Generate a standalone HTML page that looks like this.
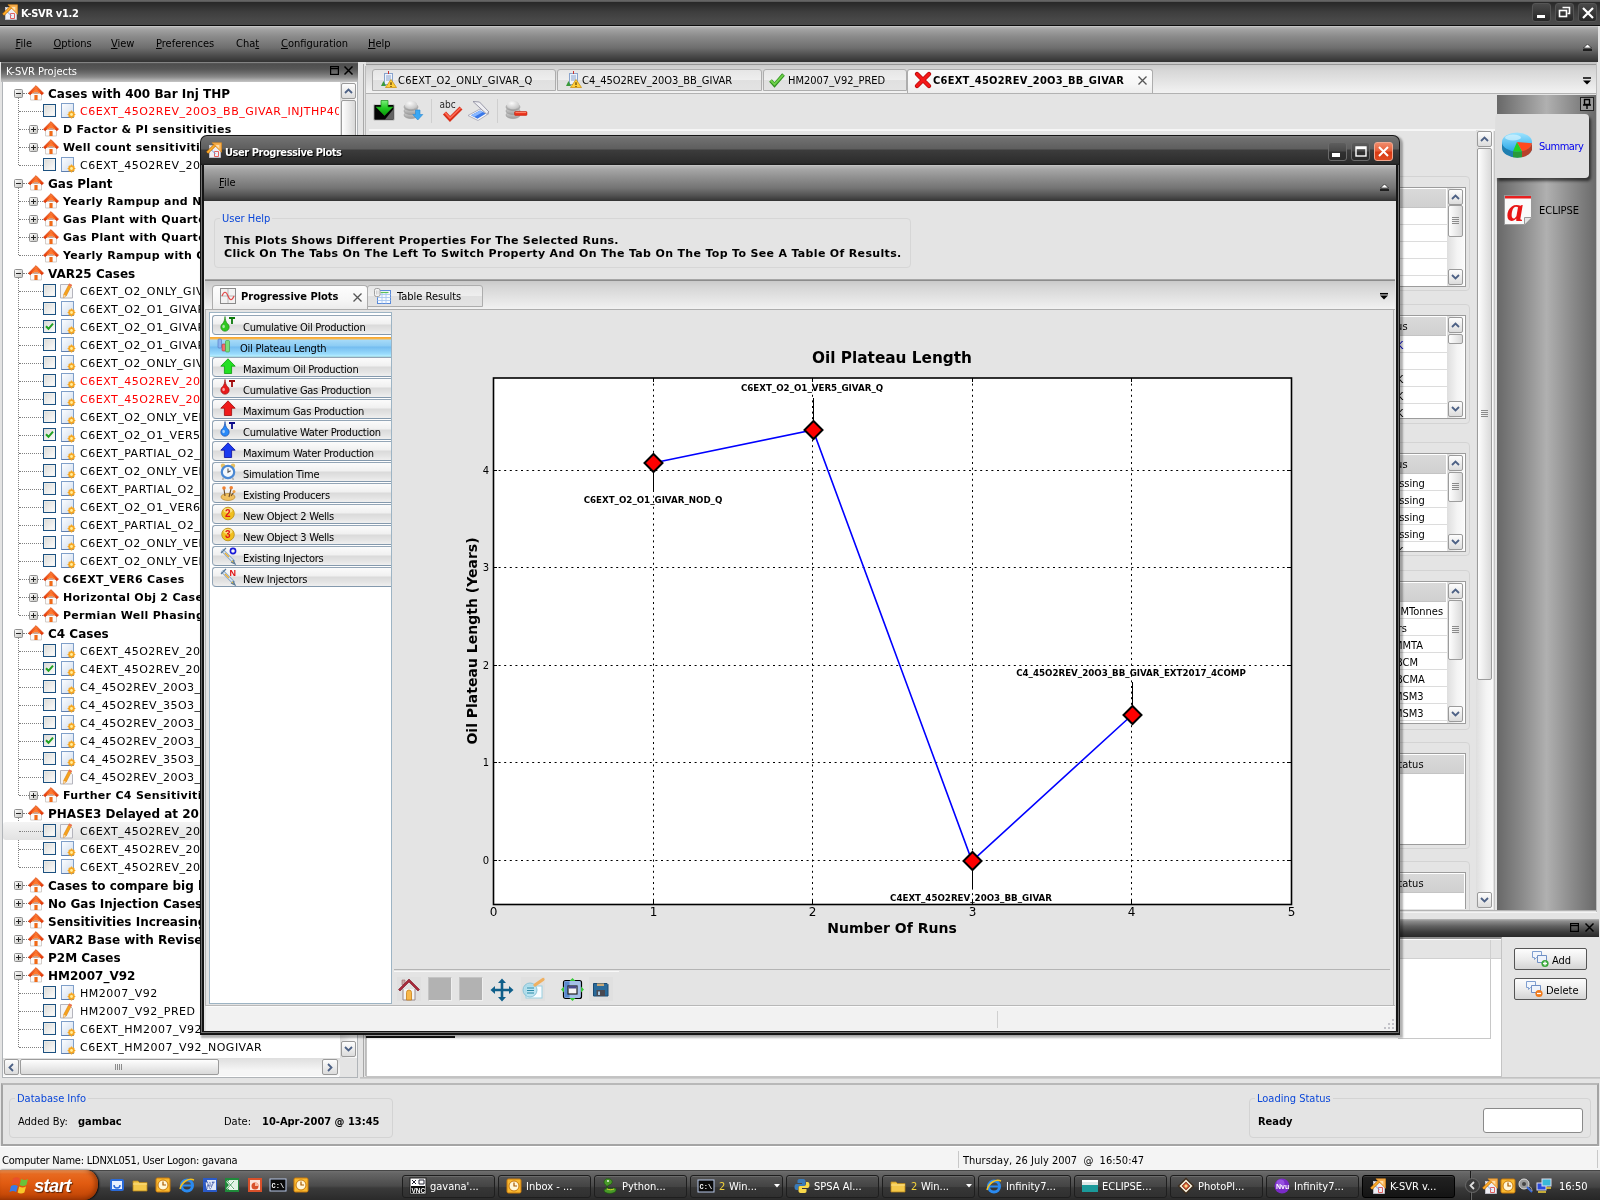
<!DOCTYPE html>
<html lang="en"><head><meta charset="utf-8"><title>K-SVR v1.2</title>
<style>
*{box-sizing:border-box;margin:0;padding:0}
html,body{width:1600px;height:1200px;overflow:hidden;background:#e4e4e4}
body{position:relative;font-family:"DejaVu Sans Condensed","Liberation Sans",sans-serif;font-size:11px;color:#000;line-height:1}
.a{position:absolute}
.t{position:absolute;white-space:nowrap;line-height:14px;height:14px;margin-top:1px}
.v{font-family:"DejaVu Sans","Liberation Sans",sans-serif}
.b{font-weight:bold}
.w{color:#fff}
.red{color:#f00}
.blue{color:#0040d0}
u{text-decoration:underline;text-underline-offset:1px}
svg{position:absolute;overflow:visible}
.sbbtn{position:absolute;width:15px;height:16px;border:1px solid #9a9a9a;border-radius:2px;background:linear-gradient(#fdfdfd,#dcdcdc)}
.sbtrack{position:absolute;background:linear-gradient(90deg,#dedede,#f4f4f4 60%,#fafafa)}
.sbthumb{position:absolute;border:1px solid #9c9c9c;border-radius:2px;background:linear-gradient(90deg,#fefefe,#d9d9d9)}
.grp{position:absolute;border:1px solid #d3d3d3;border-radius:4px}
.hdr{position:absolute;background:linear-gradient(#d9d9d9,#d0d0d0);border-bottom:1px solid #c4c4c4}
.row{position:absolute;border-bottom:1px solid #dcdcdc;background:#fff}
</style></head>
<body>
<div id="root" style="position:absolute;left:0;top:0;width:1600px;height:1200px;will-change:transform">
<div class="a" style="left:0;top:0;width:1600px;height:26px;background:linear-gradient(#6a6a6a 0,#5a5a5a 1.5px,#282828 2px,#2e2e2e 5px,#3e3e3e 12px,#484848 20px,#4a4a4a 24.500px,#0e0e0e 25px,#0e0e0e 26px)"></div>
<svg style="left:2px;top:4px" width="17" height="16" viewBox="0 0 17 16"><rect x="3.5" y="3.5" width="11" height="12" fill="#eeeef4" stroke="#c9c9d4" stroke-width=".8"/><path d="M6 .8H15.500V10.300z" fill="#f8b050" stroke="#d88a20" stroke-width=".7"/><path d="M9.500 3h3.800v3.800z" fill="#fde0b0"/><path d="M8.500 9.500h4v5h-4z" fill="none" stroke="#e06060" stroke-width="1"/><path d="M5.500 8l4 4" stroke="#6a9ae0" stroke-width=".9"/><path d="M1.200 10.800L8.800 3.200" stroke="#c06a00" stroke-width="3"/><path d="M1.400 10.600L8.600 3.400" stroke="#ffb030" stroke-width="1.600"/></svg>
<div class="t b w" style="left:21px;top:6px;font-size:11px;letter-spacing:-.3px">K-SVR v1.2</div>
<div class="a" style="left:1532px;top:3px;width:19px;height:19px;border-radius:3px;background:linear-gradient(#4a4a4a,#262626);border:1px solid #555"></div>
<div class="a" style="left:1555px;top:3px;width:19px;height:19px;border-radius:3px;background:linear-gradient(#4a4a4a,#262626);border:1px solid #555"></div>
<div class="a" style="left:1578px;top:3px;width:19px;height:19px;border-radius:3px;background:linear-gradient(#4a4a4a,#262626);border:1px solid #555"></div>
<div class="a" style="left:1537px;top:15px;width:8px;height:3px;background:#fff"></div>
<svg style="left:1558px;top:6px" width="13" height="13" viewBox="0 0 13 13"><path d="M4.5 1.5h7v6h-2" fill="none" stroke="#fff" stroke-width="1.6"/><rect x="1.5" y="4.5" width="7" height="6" fill="none" stroke="#fff" stroke-width="1.6"/></svg>
<svg style="left:1582px;top:7px" width="12" height="12" viewBox="0 0 12 12"><path d="M1 1L11 11M11 1L1 11" stroke="#fff" stroke-width="2.2"/></svg>
<div class="a" style="left:0;top:26px;width:1598px;height:36px;background:linear-gradient(#d8d8d8 0,#b2b2b2 1px,#a0a0a0 4px,#8c8c8c 10px,#6e6e6e 22px,#4a4a4a 30px,#363636 35px,#333 36px)"></div>
<div class="t" style="left:15.5px;top:36px"><u>F</u>ile</div>
<div class="t" style="left:53.5px;top:36px"><u>O</u>ptions</div>
<div class="t" style="left:111px;top:36px"><u>V</u>iew</div>
<div class="t" style="left:156px;top:36px"><u>P</u>references</div>
<div class="t" style="left:236px;top:36px">Cha<u>t</u></div>
<div class="t" style="left:281px;top:36px"><u>C</u>onfiguration</div>
<div class="t" style="left:368px;top:36px"><u>H</u>elp</div>
<svg style="left:1583px;top:43px" width="9" height="8" viewBox="0 0 9 8"><path d="M0.5 5L4.5 1L8.5 5Z" fill="#fff" stroke="#000" stroke-width=".6"/><path d="M0 7h9" stroke="#000" stroke-width="1.4"/></svg>
<div class="a" style="left:363px;top:64px;width:1237px;height:1014px;border-left:1px solid #a8a8a8"></div>
<div class="a" style="left:365px;top:66px;width:1px;height:1010px;background:#bcbcbc"></div>
<div class="a" style="left:366px;top:62px;width:1231px;height:31px;background:linear-gradient(#c4c4c4 0,#c8c8c8 1.500px,#969696 2px,#969696 3px,#cdcdcd 3.500px,#d6d6d6 8px,#ececec 26px,#f2f2f2 31px)"></div>
<div class="a" style="left:366px;top:93px;width:1231px;height:1px;background:#b2b2b2"></div>
<div class="a" style="left:372px;top:69px;width:184px;height:22px;background:linear-gradient(#e6e6e6,#eeeeee 48%,#e0e0e0 50%,#e3e3e3);border:1px solid #adadad;border-radius:3px 3px 0 0"></div>
<div class="t" style="left:398px;top:73px;letter-spacing:.25px">C6EXT_O2_ONLY_GIVAR_Q</div>
<svg style="left:381px;top:71px" width="16" height="17" viewBox="0 0 16 17"><rect x="3.5" y="2.5" width="8" height="11" fill="#eef3fb" stroke="#8aa4cc"/><path d="M5 5h5M5 7h5M5 9h5" stroke="#6f8fc4" stroke-width=".8"/><path d="M7.5 0v3" stroke="#c33" stroke-width="1"/><path d="M0 15l2.5-5 2.5 5z" fill="#3a9a3a"/><path d="M10 8.5l5.5 8h-11z" fill="#ffcf3a" stroke="#c98a00" stroke-width=".7"/><path d="M10 11.2v2.8M10 15v.9" stroke="#5a3a00" stroke-width="1.2"/></svg>
<div class="a" style="left:557px;top:69px;width:205px;height:22px;background:linear-gradient(#e6e6e6,#eeeeee 48%,#e0e0e0 50%,#e3e3e3);border:1px solid #adadad;border-radius:3px 3px 0 0"></div>
<div class="t" style="left:582px;top:73px;letter-spacing:0">C4_45O2REV_20O3_BB_GIVAR</div>
<svg style="left:566px;top:71px" width="16" height="17" viewBox="0 0 16 17"><rect x="3.5" y="2.5" width="8" height="11" fill="#eef3fb" stroke="#8aa4cc"/><path d="M5 5h5M5 7h5M5 9h5" stroke="#6f8fc4" stroke-width=".8"/><path d="M7.5 0v3" stroke="#c33" stroke-width="1"/><path d="M0 15l2.5-5 2.5 5z" fill="#3a9a3a"/><path d="M10 8.5l5.5 8h-11z" fill="#ffcf3a" stroke="#c98a00" stroke-width=".7"/><path d="M10 11.2v2.8M10 15v.9" stroke="#5a3a00" stroke-width="1.2"/></svg>
<div class="a" style="left:763px;top:69px;width:144px;height:22px;background:linear-gradient(#e6e6e6,#eeeeee 48%,#e0e0e0 50%,#e3e3e3);border:1px solid #adadad;border-radius:3px 3px 0 0"></div>
<div class="t" style="left:788px;top:73px;letter-spacing:0">HM2007_V92_PRED</div>
<svg style="left:769px;top:72px" width="16" height="16" viewBox="0 0 16 16"><path d="M1.5 8.5L5.5 13 14.5 2.5" fill="none" stroke="#2f8f1f" stroke-width="3.6"/><path d="M1.8 8.5L5.5 12.4 14.2 2.8" fill="none" stroke="#6fd24a" stroke-width="2"/></svg>
<div class="a" style="left:907px;top:69px;width:246px;height:24px;background:linear-gradient(#fcfcfc,#f6f6f6 60%,#ececec);border:1px solid #adadad;border-bottom:none;border-radius:3px 3px 0 0"></div>
<div class="t b" style="left:933px;top:73px;letter-spacing:.25px">C6EXT_45O2REV_20O3_BB_GIVAR</div>
<svg style="left:915px;top:72px" width="16" height="16" viewBox="0 0 16 16"><path d="M2 2L14 14M14 2L2 14" stroke="#b80808" stroke-width="4.400" stroke-linecap="round"/><path d="M2.2 2.2L13.8 13.8M13.8 2.2L2.2 13.8" stroke="#f41818" stroke-width="3" stroke-linecap="round"/></svg>
<svg style="left:1138px;top:76px" width="9" height="9"><path d="M.5.5l8 8M8.5.5l-8 8" stroke="#555" stroke-width="1.3"/></svg>
<svg style="left:1582px;top:78px" width="10" height="7"><path d="M1 0h8" stroke="#000" stroke-width="1.5"/><path d="M1 2.5h8L5 6.5z" fill="#000"/></svg>
<svg width="0" height="0" style="left:0;top:0"><defs><linearGradient id="gDb" x1="0" y1="0" x2="0" y2="1"><stop offset="0" stop-color="#dcdcdc"/><stop offset="1" stop-color="#9c9c9c"/></linearGradient><radialGradient id="gDb2" cx=".4" cy=".3" r=".8"><stop offset="0" stop-color="#fafafa"/><stop offset="1" stop-color="#bdbdbd"/></radialGradient><linearGradient id="gGr" x1="0" y1="0" x2="0" y2="1"><stop offset="0" stop-color="#7af07a"/><stop offset=".5" stop-color="#22c822"/><stop offset="1" stop-color="#0a9a0a"/></linearGradient></defs></svg>
<svg style="left:373px;top:100px" width="22" height="22" viewBox="0 0 22 22"><rect x=".7" y="4.500" width="20.600" height="15.800" rx="1.200" fill="#050505" stroke="#c8c8c8" stroke-width="1.200"/><path d="M20.500 9v10.500H12z" fill="#b0b0b0" opacity=".55"/><path d="M8 .5h7V7h5L11.500 15.500 3 7h5z" fill="url(#gGr)" stroke="#128a12" stroke-width=".7"/></svg>
<svg style="left:403px;top:100px" width="22" height="22" viewBox="0 0 22 22"><ellipse cx="8" cy="15" rx="7" ry="3.600" fill="url(#gDb)" stroke="#8e8e8e" stroke-width=".5"/><ellipse cx="8" cy="11" rx="7" ry="3.600" fill="url(#gDb)" stroke="#8e8e8e" stroke-width=".5"/><ellipse cx="8" cy="7" rx="7" ry="3.600" fill="url(#gDb)" stroke="#8e8e8e" stroke-width=".5"/><ellipse cx="8" cy="5" rx="6.200" ry="4.200" fill="url(#gDb2)"/><path d="M12.500 10h4.500v4.500h2.800l-5 5.500-5-5.500h2.700z" fill="#3aa8f4" stroke="#2a86d0" stroke-width=".6"/></svg>
<div class="a" style="left:431px;top:99px;width:1px;height:24px;background:#cfcfcf"></div>
<div class="t" style="left:439.500px;top:97px;font-size:10px;color:#2a2a2a">abc</div>
<svg style="left:442px;top:106px" width="22" height="16" viewBox="0 0 22 16"><path d="M2.500 7l5.500 6L19 2" fill="none" stroke="#d8301a" stroke-width="4.200"/><path d="M3 6.600l5 5.400L18.500 2" fill="none" stroke="#ff6a54" stroke-width="1.600"/></svg>
<svg style="left:467px;top:100px" width="24" height="22" viewBox="0 0 24 22"><path d="M1 15.500l12-6.500 9 4.500-11 7z" fill="#fafafa" stroke="#a0a0b0" stroke-width=".8"/><path d="M4 15.300l9-4.800 6 3-8.500 5.200z" fill="#3a78e8"/><path d="M4 15.300l9-4.800 3 1.500-9 5z" fill="#8ab8ff"/><path d="M6 1.500l6.500.5 9.500 10-2.500 2z" fill="#eeeef2" stroke="#8e8ea0" stroke-width=".9"/></svg>
<div class="a" style="left:497px;top:99px;width:1px;height:24px;background:#cfcfcf"></div>
<svg style="left:505px;top:100px" width="24" height="22" viewBox="0 0 24 22"><ellipse cx="8" cy="15" rx="7" ry="3.600" fill="url(#gDb)" stroke="#8e8e8e" stroke-width=".5"/><ellipse cx="8" cy="11" rx="7" ry="3.600" fill="url(#gDb)" stroke="#8e8e8e" stroke-width=".5"/><ellipse cx="8" cy="7" rx="7" ry="3.600" fill="url(#gDb)" stroke="#8e8e8e" stroke-width=".5"/><ellipse cx="8" cy="5" rx="6.200" ry="4.200" fill="url(#gDb2)"/><rect x="9.500" y="11.500" width="12.500" height="4" rx="1" fill="#e8301a" stroke="#c0200a" stroke-width=".5"/><path d="M10.500 12.600h10.500" stroke="#ff8a70" stroke-width="1"/></svg>
<div class="a" style="left:369px;top:129px;width:1126px;height:784px;border-top:2px solid #f6f6f6"></div>
<div class="grp" style="left:1300px;top:176px;width:170px;height:115px"></div>
<div class="a" style="left:1300px;top:187px;width:166px;height:100px;background:#fff;border:1px solid #9c9c9c;overflow:hidden">
<div class="hdr" style="left:1px;top:1px;width:144px;height:19px"></div>
<div class="row" style="left:0;top:20px;width:146px;height:17px"></div>
<div class="row" style="left:0;top:37px;width:146px;height:17px"></div>
<div class="row" style="left:0;top:54px;width:146px;height:17px"></div>
<div class="row" style="left:0;top:71px;width:146px;height:17px"></div>
<div class="row" style="left:0;top:88px;width:146px;height:17px"></div>
</div>
<div class="sbtrack" style="left:1447px;top:188px;width:17px;height:98px"></div>
<div class="sbbtn" style="left:1448px;top:189px"></div>
<svg style="left:1451px;top:194px" width="9" height="6"><path d="M1 5L4.5 1.5 8 5" fill="none" stroke="#4d6185" stroke-width="1.8"/></svg>
<div class="sbthumb" style="left:1448px;top:205px;width:15px;height:32px"></div>
<div class="a" style="left:1452px;top:217px;width:7px;height:8px;background:repeating-linear-gradient(#8a8a8a 0 1px,transparent 1px 2px)"></div>
<div class="sbbtn" style="left:1448px;top:269px"></div>
<svg style="left:1451px;top:274px" width="9" height="6"><path d="M1 1L4.5 4.5 8 1" fill="none" stroke="#4d6185" stroke-width="1.8"/></svg>
<div class="grp" style="left:1300px;top:304px;width:170px;height:120px"></div>
<div class="a" style="left:1300px;top:315px;width:166px;height:104px;background:#fff;border:1px solid #9c9c9c;overflow:hidden">
<div class="hdr" style="left:1px;top:1px;width:144px;height:19px"></div>
<div class="t" style="left:75px;top:3px">Status</div>
<div class="row" style="left:0;top:20px;width:146px;height:17px"></div>
<div class="t" style="left:88px;top:22px;color:#00c">OK</div>
<div class="row" style="left:0;top:37px;width:146px;height:17px"></div>
<div class="row" style="left:0;top:54px;width:146px;height:17px"></div>
<div class="t" style="left:88px;top:56px;color:#000">OK</div>
<div class="row" style="left:0;top:71px;width:146px;height:17px"></div>
<div class="t" style="left:88px;top:73px;color:#000">OK</div>
<div class="row" style="left:0;top:88px;width:146px;height:17px"></div>
<div class="t" style="left:88px;top:90px;color:#000">OK</div>
</div>
<div class="sbtrack" style="left:1447px;top:316px;width:17px;height:102px"></div>
<div class="sbbtn" style="left:1448px;top:317px"></div>
<svg style="left:1451px;top:322px" width="9" height="6"><path d="M1 5L4.5 1.5 8 5" fill="none" stroke="#4d6185" stroke-width="1.8"/></svg>
<div class="sbthumb" style="left:1448px;top:334px;width:15px;height:10px"></div>
<div class="sbbtn" style="left:1448px;top:401px"></div>
<svg style="left:1451px;top:406px" width="9" height="6"><path d="M1 1L4.5 4.5 8 1" fill="none" stroke="#4d6185" stroke-width="1.8"/></svg>
<div class="grp" style="left:1300px;top:442px;width:170px;height:114px"></div>
<div class="a" style="left:1300px;top:453px;width:166px;height:99px;background:#fff;border:1px solid #9c9c9c;overflow:hidden">
<div class="hdr" style="left:1px;top:1px;width:144px;height:19px"></div>
<div class="t" style="left:75px;top:3px">Status</div>
<div class="row" style="left:0;top:20px;width:146px;height:17px"></div>
<div class="t" style="left:71px;top:22px;color:#000">Processing</div>
<div class="row" style="left:0;top:37px;width:146px;height:17px"></div>
<div class="t" style="left:71px;top:39px;color:#000">Processing</div>
<div class="row" style="left:0;top:54px;width:146px;height:17px"></div>
<div class="t" style="left:71px;top:56px;color:#000">Processing</div>
<div class="row" style="left:0;top:71px;width:146px;height:17px"></div>
<div class="t" style="left:71px;top:73px;color:#000">Processing</div>
<div class="row" style="left:0;top:88px;width:146px;height:17px"></div>
<div class="t" style="left:88px;top:90px;color:#000">OK</div>
</div>
<div class="sbtrack" style="left:1447px;top:454px;width:17px;height:97px"></div>
<div class="sbbtn" style="left:1448px;top:455px"></div>
<svg style="left:1451px;top:460px" width="9" height="6"><path d="M1 5L4.5 1.5 8 5" fill="none" stroke="#4d6185" stroke-width="1.8"/></svg>
<div class="sbthumb" style="left:1448px;top:472px;width:15px;height:30px"></div>
<div class="a" style="left:1452px;top:483px;width:7px;height:8px;background:repeating-linear-gradient(#8a8a8a 0 1px,transparent 1px 2px)"></div>
<div class="sbbtn" style="left:1448px;top:534px"></div>
<svg style="left:1451px;top:539px" width="9" height="6"><path d="M1 1L4.5 4.5 8 1" fill="none" stroke="#4d6185" stroke-width="1.8"/></svg>
<div class="grp" style="left:1300px;top:570px;width:170px;height:160px"></div>
<div class="a" style="left:1300px;top:581px;width:166px;height:143px;background:#fff;border:1px solid #9c9c9c;overflow:hidden">
<div class="hdr" style="left:1px;top:1px;width:144px;height:19px"></div>
<div class="row" style="left:0;top:20px;width:146px;height:17px"></div>
<div class="t" style="left:91px;top:22px;color:#000">MMTonnes</div>
<div class="row" style="left:0;top:37px;width:146px;height:17px"></div>
<div class="t" style="left:80px;top:39px;color:#000">Years</div>
<div class="row" style="left:0;top:54px;width:146px;height:17px"></div>
<div class="t" style="left:93px;top:56px;color:#000">MMTA</div>
<div class="row" style="left:0;top:71px;width:146px;height:17px"></div>
<div class="t" style="left:95px;top:73px;color:#000">BCM</div>
<div class="row" style="left:0;top:88px;width:146px;height:17px"></div>
<div class="t" style="left:95px;top:90px;color:#000">BCMA</div>
<div class="row" style="left:0;top:105px;width:146px;height:17px"></div>
<div class="t" style="left:93px;top:107px;color:#000">MSM3</div>
<div class="row" style="left:0;top:122px;width:146px;height:17px"></div>
<div class="t" style="left:93px;top:124px;color:#000">MSM3</div>
<div class="row" style="left:0;top:139px;width:146px;height:17px"></div>
</div>
<div class="sbtrack" style="left:1447px;top:582px;width:17px;height:141px"></div>
<div class="sbbtn" style="left:1448px;top:583px"></div>
<svg style="left:1451px;top:588px" width="9" height="6"><path d="M1 5L4.5 1.5 8 5" fill="none" stroke="#4d6185" stroke-width="1.8"/></svg>
<div class="sbthumb" style="left:1448px;top:600px;width:15px;height:60px"></div>
<div class="a" style="left:1452px;top:626px;width:7px;height:8px;background:repeating-linear-gradient(#8a8a8a 0 1px,transparent 1px 2px)"></div>
<div class="sbbtn" style="left:1448px;top:706px"></div>
<svg style="left:1451px;top:711px" width="9" height="6"><path d="M1 1L4.5 4.5 8 1" fill="none" stroke="#4d6185" stroke-width="1.8"/></svg>
<div class="grp" style="left:1300px;top:742px;width:170px;height:107px"></div>
<div class="a" style="left:1300px;top:753px;width:166px;height:92px;background:#fff;border:1px solid #9c9c9c;overflow:hidden">
<div class="hdr" style="left:1px;top:1px;width:162px;height:19px"></div>
<div class="t" style="left:91px;top:3px">Status</div>
</div>
<div class="a" style="left:1300px;top:861px;width:170px;height:52px;overflow:hidden"><div class="grp" style="left:0;top:0;width:170px;height:80px"></div></div>
<div class="a" style="left:1300px;top:872px;width:166px;height:37px;overflow:hidden;background:#fff;border:1px solid #9c9c9c;border-bottom:none"><div class="hdr" style="left:1px;top:1px;width:162px;height:19px"></div><div class="t" style="left:91px;top:3px">Status</div></div>
<div class="sbtrack" style="left:1476px;top:130px;width:17px;height:779px"></div>
<div class="sbbtn" style="left:1477px;top:131px"></div>
<svg style="left:1480px;top:136px" width="9" height="6"><path d="M1 5L4.5 1.5 8 5" fill="none" stroke="#4d6185" stroke-width="1.8"/></svg>
<div class="sbthumb" style="left:1477px;top:148px;width:15px;height:532px"></div>
<div class="a" style="left:1481px;top:410px;width:7px;height:8px;background:repeating-linear-gradient(#8a8a8a 0 1px,transparent 1px 2px)"></div>
<div class="sbbtn" style="left:1477px;top:892px"></div>
<svg style="left:1480px;top:897px" width="9" height="6"><path d="M1 1L4.5 4.5 8 1" fill="none" stroke="#4d6185" stroke-width="1.8"/></svg>
<div class="a" style="left:369px;top:910px;width:1228px;height:3px;background:linear-gradient(#b4b4b4 0,#b4b4b4 1px,#e4e4e4 1px,#e4e4e4 2px,#f4f4f4 2px)"></div>
<div class="a" style="left:1494px;top:131px;width:1px;height:779px;background:#c4c4c4"></div>
<div class="a" style="left:1596px;top:64px;width:1px;height:848px;background:#bdbdbd"></div>
<div class="a" style="left:1497px;top:95px;width:99px;height:815px;background:linear-gradient(90deg,#686868 0,#8a8a8a 25%,#b0b0b0 50%,#8c8c8c 75%,#6a6a6a 100%)"></div>
<div class="a" style="left:1497px;top:95px;width:99px;height:18px;background:linear-gradient(90deg,#686868,#b0b0b0 50%,#6a6a6a)"></div>
<svg style="left:1580px;top:97px" width="14" height="14" viewBox="0 0 14 14"><rect x=".5" y=".5" width="13" height="13" fill="#9a9a9a" stroke="#222"/><path d="M4.5 2.5h5v5h-5zM3 8h8M7 8v4" fill="none" stroke="#000" stroke-width="1.4"/></svg>
<div class="a" style="left:1496px;top:114px;width:93px;height:64px;background:#dedede;border-radius:0 4px 4px 0;box-shadow:2px 3px 3px rgba(0,0,0,.6)"></div>
<svg style="left:1501px;top:131px" width="34" height="30" viewBox="0 0 34 30"><defs><linearGradient id="gPie" x1="0" y1="0" x2="0" y2="1"><stop offset="0" stop-color="#9fe4ff"/><stop offset="1" stop-color="#28a8e8"/></linearGradient></defs><path d="M1 11v6a15 9.500 0 0 0 30 0v-6z" fill="#1f7fb0"/><path d="M12 26.200v-6h9v6a15 9.500 0 0 1-9 0z" fill="#2a9a3a"/><path d="M21 26.200c5-1 9-4 10-8v-6l-10 8z" fill="#b8402a"/><ellipse cx="16" cy="11" rx="15" ry="9.500" fill="url(#gPie)"/><path d="M16 11L12 20.200a15 9.500 0 0 0 9 0z" fill="#22d022"/><path d="M16 11L21 20.200c5-1 9-4 10-8z" fill="#ff4a20"/><ellipse cx="12" cy="6.500" rx="8" ry="3" fill="#e4f8ff" opacity=".6"/></svg>
<div class="t" style="left:1539px;top:139px;color:#00e;letter-spacing:-.5px">Summary</div>
<svg style="left:1503px;top:194px" width="30" height="32" viewBox="0 0 30 32"><path d="M1.5 1.5h27v22l-7 7h-20z" fill="#fafafa" stroke="#9a9a9a"/><path d="M21.5 30.5v-7h7" fill="#e4e4e4" stroke="#9a9a9a"/><rect x="2" y="2" width="26" height="2.500" fill="#e82020"/></svg>
<div class="t b" style="left:1507px;top:194px;font-family:'Liberation Serif',serif;font-style:italic;font-size:33px;line-height:30px;height:30px;color:#e81414">a</div>
<div class="t" style="left:1539px;top:203px">ECLIPSE</div>
<div class="a" style="left:1398px;top:919px;width:201px;height:18px;background:linear-gradient(#b8b8b8 0,#8e8e8e 2px,#626262 7px,#3c3c3c 13px,#282828 18px)"></div>
<svg style="left:1570px;top:923px" width="9" height="9" viewBox="0 0 9 9"><rect x=".6" y=".6" width="7.8" height="7.8" fill="none" stroke="#000" stroke-width="1.2"/><path d="M.6 2.6h7.8" stroke="#000" stroke-width="1.2"/></svg>
<svg style="left:1585px;top:923px" width="9" height="9" viewBox="0 0 9 9"><path d="M.5.5l8 8M8.5.5l-8 8" stroke="#000" stroke-width="1.5"/></svg>
<div class="a" style="left:366px;top:937px;width:1136px;height:140px;background:#fff;border:1px solid #c4c4c4;border-top:2px solid #8e8e8e"></div>
<div class="a" style="left:1398px;top:940px;width:93px;height:99px;background:#fff;border:1px solid #c8c8c8;border-left:none"></div>
<div class="a" style="left:1398px;top:940px;width:103px;height:19px;background:#e4e4e4;border-bottom:1px solid #d0d0d0"></div><div class="a" style="left:1490px;top:940px;width:1px;height:19px;background:#cfcfcf"></div>
<div class="a" style="left:1514px;top:948px;width:73px;height:22px;border:1px solid #555;border-radius:2px;background:linear-gradient(#fdfdfd,#ececec 50%,#d4d4d4)"></div>
<div class="a" style="left:1514px;top:978px;width:73px;height:22px;border:1px solid #555;border-radius:2px;background:linear-gradient(#fdfdfd,#ececec 50%,#d4d4d4)"></div>
<div class="t" style="left:1552px;top:953px">Add</div>
<div class="t" style="left:1546px;top:983px">Delete</div>
<svg style="left:1531px;top:950px" width="19" height="18" viewBox="0 0 19 18"><path d="M1.5 1.5h9v6h-5l-2 2v-2h-2z" fill="#f2f6fc" stroke="#7f9fd0"/><path d="M6.500 5.500h9v7h-2v2l-2-2h-5z" fill="#eef3fb" stroke="#6f8fc4"/><circle cx="14" cy="13.500" r="3.600" fill="#3aa83a"/><path d="M12 13.500h4M14 11.500v4" stroke="#fff" stroke-width="1.300"/></svg>
<svg style="left:1525px;top:980px" width="19" height="18" viewBox="0 0 19 18"><path d="M1.5 1.5h9v6h-5l-2 2v-2h-2z" fill="#f2f6fc" stroke="#7f9fd0"/><path d="M6.500 5.500h9v7h-2v2l-2-2h-5z" fill="#eef3fb" stroke="#6f8fc4"/><circle cx="14" cy="13.500" r="3.600" fill="#f07a1a"/><path d="M12 13.500h4" stroke="#fff" stroke-width="1.300"/></svg>
<div class="a" style="left:0;top:1077px;width:1600px;height:2px;background:linear-gradient(#bcbcbc,#d4d4d4)"></div>
<div class="a" style="left:1px;top:1083px;width:1598px;height:63px;border:2px solid #a4a4a4;border-top:2px solid #b8b8b8;background:#e4e4e4"></div>
<div class="grp" style="left:9px;top:1098px;width:384px;height:40px"></div>
<div class="t" style="left:15px;top:1091px;color:#0a46d8;background:#e4e4e4;padding:0 2px">Database Info</div>
<div class="t" style="left:18px;top:1114px">Added By:</div>
<div class="t b" style="left:78px;top:1114px">gambac</div>
<div class="t" style="left:224px;top:1114px">Date:</div>
<div class="t b" style="left:262px;top:1114px">10-Apr-2007 @ 13:45</div>
<div class="grp" style="left:1249px;top:1098px;width:342px;height:40px"></div>
<div class="t" style="left:1255px;top:1091px;color:#0a46d8;background:#e4e4e4;padding:0 2px">Loading Status</div>
<div class="t b" style="left:1258px;top:1114px">Ready</div>
<div class="a" style="left:1483px;top:1108px;width:100px;height:25px;background:#fff;border:1px solid #8a8a8a;border-radius:3px"></div>
<div class="a" style="left:0;top:1146px;width:1600px;height:24px;background:#f4f4f4;border-top:1px solid #fff"></div>
<div class="t" style="left:2px;top:1153px;letter-spacing:-.22px">Computer Name: LDNXL051, User Logon: gavana</div>
<div class="a" style="left:958px;top:1151px;width:1px;height:17px;background:#c8c8c8"></div>
<div class="t" style="left:963px;top:1153px;white-space:pre">Thursday, 26 July 2007  @  16:50:47</div>
<div class="a" style="left:1597px;top:1150px;width:1px;height:18px;background:#c8c8c8"></div>
<svg width="0" height="0" style="left:0;top:0"><defs>
<linearGradient id="gRoof" x1="0" y1="0" x2="0" y2="1"><stop offset="0" stop-color="#ff8a3c"/><stop offset="1" stop-color="#e22c00"/></linearGradient>
<linearGradient id="gBox" x1="0" y1="0" x2="1" y2="1"><stop offset="0" stop-color="#fff"/><stop offset="1" stop-color="#c4c4c0"/></linearGradient>
<linearGradient id="gChk" x1="0" y1="0" x2="1" y2="1"><stop offset="0" stop-color="#d8d8d4"/><stop offset="1" stop-color="#fff"/></linearGradient>
<linearGradient id="gDoc" x1="0" y1="0" x2="1" y2="1"><stop offset="0" stop-color="#fdfeff"/><stop offset="1" stop-color="#cfdcee"/></linearGradient>
<g id="house"><path d="M2.5 8.5V15h11V8.5z" fill="#fbfbfb" stroke="#c9c1bd" stroke-width=".8"/><path d="M8 0.6L0.4 8.2 2.2 9.8 8 4.2 13.8 9.8 15.6 8.2z" fill="url(#gRoof)" stroke="#d03000" stroke-width=".6"/><path d="M8 3.600L3.200 8.200H12.800z" fill="#ff7a30"/><rect x="6.4" y="10" width="3.2" height="5" fill="#f06a18"/><rect x="6" y="7.2" width="4" height="1.8" fill="#c8a89a"/></g>
<g id="plus"><rect x=".5" y=".5" width="8" height="8" rx="1" fill="url(#gBox)" stroke="#8e8e8e"/><path d="M2 4.5h5M4.5 2v5" stroke="#222" stroke-width="1"/></g>
<g id="minus"><rect x=".5" y=".5" width="8" height="8" rx="1" fill="url(#gBox)" stroke="#8e8e8e"/><path d="M2 4.5h5" stroke="#222" stroke-width="1"/></g>
<g id="cb"><rect x=".5" y=".5" width="12" height="12" fill="url(#gChk)" stroke="#1c5180"/><rect x="1.5" y="1.5" width="10" height="10" fill="none" stroke="#f2f2ee" stroke-opacity=".6"/></g>
<g id="cbx"><rect x=".5" y=".5" width="12" height="12" fill="url(#gChk)" stroke="#1c5180"/><path d="M3 6.2L5.5 8.8 10 3.6" fill="none" stroke="#21a121" stroke-width="2"/></g>
<g id="doc"><rect x="1.5" y=".5" width="12" height="14" fill="url(#gDoc)" stroke="#7f9fc9"/><path d="M1.5 14.5h12" stroke="#5f7faf"/><circle cx="11.5" cy="11.5" r="3.2" fill="#f5a623"/><circle cx="11.5" cy="11.5" r="1.3" fill="#ffe27a"/><path d="M11.5 7.6v7.8M7.6 11.5h7.8M8.8 8.8l5.4 5.4M14.2 8.8l-5.4 5.4" stroke="#f5a623" stroke-width="1.2"/><circle cx="11.5" cy="11.5" r="1.4" fill="#fff0a0"/></g>
<g id="pen"><path d="M.5 1.5h8l4 4v9.5h-12z" fill="#f4f4f6" stroke="#b4b4bc"/><path d="M9.2 0.8l2.6 1.2-5.6 11-2.8 1.8.2-3.2z" fill="#f6a21c" stroke="#d07a10" stroke-width=".5"/><path d="M3.4 14.8l.2-3.2 2.6 1.4z" fill="#f3d9b0"/><path d="M9.2 .8l2.6 1.2-.7 1.4-2.6-1.2z" fill="#e66"/></g>
</defs></svg>
<div class="a" style="left:0;top:62px;width:360px;height:1018px;background:#e4e4e4"></div>
<div class="a" style="left:1px;top:62px;width:357px;height:20px;background:linear-gradient(#a8a8a8 0,#5c5c5c 1px,#4e4e4e 2px,#565656 7px,#6c6c6c 11px,#8a8a8a 15px,#b0b0b0 18px,#c2c2c2 20px)"></div>
<div class="t w" style="left:6px;top:64px">K-SVR Projects</div>
<svg style="left:330px;top:66px" width="9" height="9" viewBox="0 0 9 9"><rect x=".6" y=".6" width="7.8" height="7.8" fill="none" stroke="#000" stroke-width="1.2"/><path d="M.6 2.6h7.8" stroke="#000" stroke-width="1.2"/></svg>
<svg style="left:344px;top:66px" width="9" height="9" viewBox="0 0 9 9"><path d="M.5.5l8 8M8.5.5l-8 8" stroke="#000" stroke-width="1.5"/></svg>
<div class="a" style="left:2px;top:81px;width:356px;height:997px;background:#fff;border:1px solid #b0b4b8;border-top:1px solid #c0c0c0"></div>
<div class="a" style="left:3px;top:82px;width:336px;height:976px;overflow:hidden">
<div class="a" style="left:15px;top:16px;width:0;height:67px;border-left:1px dotted #808080"></div>
<div class="a" style="left:15px;top:106px;width:0;height:67px;border-left:1px dotted #808080"></div>
<div class="a" style="left:15px;top:196px;width:0;height:337px;border-left:1px dotted #808080"></div>
<div class="a" style="left:15px;top:556px;width:0;height:157px;border-left:1px dotted #808080"></div>
<div class="a" style="left:15px;top:736px;width:0;height:49px;border-left:1px dotted #808080"></div>
<div class="a" style="left:15px;top:898px;width:0;height:67px;border-left:1px dotted #808080"></div>
<div class="a" style="left:20px;top:11px;width:6px;height:0;border-top:1px dotted #808080"></div>
<svg style="left:11px;top:7px" width="9" height="9"><use href="#minus"/></svg>
<svg style="left:25px;top:3px" width="16" height="16"><use href="#house"/></svg>
<div class="t v b" style="left:45px;top:3px;font-size:12px;line-height:16px;height:16px">Cases with 400 Bar Inj THP</div>
<div class="a" style="left:16px;top:29px;width:24px;height:0;border-top:1px dotted #808080"></div>
<svg style="left:40px;top:22px" width="13" height="13"><use href="#cb"/></svg>
<svg style="left:57px;top:21px" width="16" height="16"><use href="#doc"/></svg>
<div class="t v" style="left:77px;top:22px;letter-spacing:.5px;color:#f00">C6EXT_45O2REV_20O3_BB_GIVAR_INJTHP400</div>
<div class="a" style="left:16px;top:47px;width:10px;height:0;border-top:1px dotted #808080"></div>
<svg style="left:26px;top:43px" width="9" height="9"><use href="#plus"/></svg>
<div class="a" style="left:35px;top:47px;width:5px;height:0;border-top:1px dotted #808080"></div>
<svg style="left:40px;top:39px" width="16" height="16"><use href="#house"/></svg>
<div class="t v b" style="left:60px;top:40px;letter-spacing:.3px">D Factor &amp; PI sensitivities</div>
<div class="a" style="left:16px;top:65px;width:10px;height:0;border-top:1px dotted #808080"></div>
<svg style="left:26px;top:61px" width="9" height="9"><use href="#plus"/></svg>
<div class="a" style="left:35px;top:65px;width:5px;height:0;border-top:1px dotted #808080"></div>
<svg style="left:40px;top:57px" width="16" height="16"><use href="#house"/></svg>
<div class="t v b" style="left:60px;top:58px;letter-spacing:.3px">Well count sensitivities</div>
<div class="a" style="left:16px;top:83px;width:24px;height:0;border-top:1px dotted #808080"></div>
<svg style="left:40px;top:76px" width="13" height="13"><use href="#cb"/></svg>
<svg style="left:57px;top:75px" width="16" height="16"><use href="#doc"/></svg>
<div class="t v" style="left:77px;top:76px;letter-spacing:.5px">C6EXT_45O2REV_20O3_BB_GIVAR_NEW</div>
<div class="a" style="left:20px;top:101px;width:6px;height:0;border-top:1px dotted #808080"></div>
<svg style="left:11px;top:97px" width="9" height="9"><use href="#minus"/></svg>
<svg style="left:25px;top:93px" width="16" height="16"><use href="#house"/></svg>
<div class="t v b" style="left:45px;top:93px;font-size:12px;line-height:16px;height:16px">Gas Plant</div>
<div class="a" style="left:16px;top:119px;width:10px;height:0;border-top:1px dotted #808080"></div>
<svg style="left:26px;top:115px" width="9" height="9"><use href="#plus"/></svg>
<div class="a" style="left:35px;top:119px;width:5px;height:0;border-top:1px dotted #808080"></div>
<svg style="left:40px;top:111px" width="16" height="16"><use href="#house"/></svg>
<div class="t v b" style="left:60px;top:112px;letter-spacing:.3px">Yearly Rampup and No Givar</div>
<div class="a" style="left:16px;top:137px;width:10px;height:0;border-top:1px dotted #808080"></div>
<svg style="left:26px;top:133px" width="9" height="9"><use href="#plus"/></svg>
<div class="a" style="left:35px;top:137px;width:5px;height:0;border-top:1px dotted #808080"></div>
<svg style="left:40px;top:129px" width="16" height="16"><use href="#house"/></svg>
<div class="t v b" style="left:60px;top:130px;letter-spacing:.3px">Gas Plant with Quarterly</div>
<div class="a" style="left:16px;top:155px;width:10px;height:0;border-top:1px dotted #808080"></div>
<svg style="left:26px;top:151px" width="9" height="9"><use href="#plus"/></svg>
<div class="a" style="left:35px;top:155px;width:5px;height:0;border-top:1px dotted #808080"></div>
<svg style="left:40px;top:147px" width="16" height="16"><use href="#house"/></svg>
<div class="t v b" style="left:60px;top:148px;letter-spacing:.3px">Gas Plant with Quarterly</div>
<div class="a" style="left:16px;top:173px;width:24px;height:0;border-top:1px dotted #808080"></div>
<svg style="left:40px;top:165px" width="16" height="16"><use href="#house"/></svg>
<div class="t v b" style="left:60px;top:166px;letter-spacing:.3px">Yearly Rampup with Givar</div>
<div class="a" style="left:20px;top:191px;width:6px;height:0;border-top:1px dotted #808080"></div>
<svg style="left:11px;top:187px" width="9" height="9"><use href="#minus"/></svg>
<svg style="left:25px;top:183px" width="16" height="16"><use href="#house"/></svg>
<div class="t v b" style="left:45px;top:183px;font-size:12px;line-height:16px;height:16px">VAR25 Cases</div>
<div class="a" style="left:16px;top:209px;width:24px;height:0;border-top:1px dotted #808080"></div>
<svg style="left:40px;top:202px" width="13" height="13"><use href="#cb"/></svg>
<svg style="left:57px;top:201px" width="16" height="16"><use href="#pen"/></svg>
<div class="t v" style="left:77px;top:202px;letter-spacing:.5px">C6EXT_O2_ONLY_GIVAR_Q</div>
<div class="a" style="left:16px;top:227px;width:24px;height:0;border-top:1px dotted #808080"></div>
<svg style="left:40px;top:220px" width="13" height="13"><use href="#cb"/></svg>
<svg style="left:57px;top:219px" width="16" height="16"><use href="#doc"/></svg>
<div class="t v" style="left:77px;top:220px;letter-spacing:.5px">C6EXT_O2_O1_GIVAR_Q</div>
<div class="a" style="left:16px;top:245px;width:24px;height:0;border-top:1px dotted #808080"></div>
<svg style="left:40px;top:238px" width="13" height="13"><use href="#cbx"/></svg>
<svg style="left:57px;top:237px" width="16" height="16"><use href="#doc"/></svg>
<div class="t v" style="left:77px;top:238px;letter-spacing:.5px">C6EXT_O2_O1_GIVAR_NOD_Q</div>
<div class="a" style="left:16px;top:263px;width:24px;height:0;border-top:1px dotted #808080"></div>
<svg style="left:40px;top:256px" width="13" height="13"><use href="#cb"/></svg>
<svg style="left:57px;top:255px" width="16" height="16"><use href="#doc"/></svg>
<div class="t v" style="left:77px;top:256px;letter-spacing:.5px">C6EXT_O2_O1_GIVAR_NOD</div>
<div class="a" style="left:16px;top:281px;width:24px;height:0;border-top:1px dotted #808080"></div>
<svg style="left:40px;top:274px" width="13" height="13"><use href="#cb"/></svg>
<svg style="left:57px;top:273px" width="16" height="16"><use href="#doc"/></svg>
<div class="t v" style="left:77px;top:274px;letter-spacing:.5px">C6EXT_O2_ONLY_GIVAR</div>
<div class="a" style="left:16px;top:299px;width:24px;height:0;border-top:1px dotted #808080"></div>
<svg style="left:40px;top:292px" width="13" height="13"><use href="#cb"/></svg>
<svg style="left:57px;top:291px" width="16" height="16"><use href="#doc"/></svg>
<div class="t v" style="left:77px;top:292px;letter-spacing:.5px;color:#f00">C6EXT_45O2REV_20O3_BB</div>
<div class="a" style="left:16px;top:317px;width:24px;height:0;border-top:1px dotted #808080"></div>
<svg style="left:40px;top:310px" width="13" height="13"><use href="#cb"/></svg>
<svg style="left:57px;top:309px" width="16" height="16"><use href="#doc"/></svg>
<div class="t v" style="left:77px;top:310px;letter-spacing:.5px;color:#f00">C6EXT_45O2REV_20O3_GIVAR</div>
<div class="a" style="left:16px;top:335px;width:24px;height:0;border-top:1px dotted #808080"></div>
<svg style="left:40px;top:328px" width="13" height="13"><use href="#cb"/></svg>
<svg style="left:57px;top:327px" width="16" height="16"><use href="#doc"/></svg>
<div class="t v" style="left:77px;top:328px;letter-spacing:.5px">C6EXT_O2_ONLY_VER5</div>
<div class="a" style="left:16px;top:353px;width:24px;height:0;border-top:1px dotted #808080"></div>
<svg style="left:40px;top:346px" width="13" height="13"><use href="#cbx"/></svg>
<svg style="left:57px;top:345px" width="16" height="16"><use href="#doc"/></svg>
<div class="t v" style="left:77px;top:346px;letter-spacing:.5px">C6EXT_O2_O1_VER5_GIVAR_Q</div>
<div class="a" style="left:16px;top:371px;width:24px;height:0;border-top:1px dotted #808080"></div>
<svg style="left:40px;top:364px" width="13" height="13"><use href="#cb"/></svg>
<svg style="left:57px;top:363px" width="16" height="16"><use href="#doc"/></svg>
<div class="t v" style="left:77px;top:364px;letter-spacing:.5px">C6EXT_PARTIAL_O2_VER5</div>
<div class="a" style="left:16px;top:389px;width:24px;height:0;border-top:1px dotted #808080"></div>
<svg style="left:40px;top:382px" width="13" height="13"><use href="#cb"/></svg>
<svg style="left:57px;top:381px" width="16" height="16"><use href="#doc"/></svg>
<div class="t v" style="left:77px;top:382px;letter-spacing:.5px">C6EXT_O2_ONLY_VER5_Q</div>
<div class="a" style="left:16px;top:407px;width:24px;height:0;border-top:1px dotted #808080"></div>
<svg style="left:40px;top:400px" width="13" height="13"><use href="#cb"/></svg>
<svg style="left:57px;top:399px" width="16" height="16"><use href="#doc"/></svg>
<div class="t v" style="left:77px;top:400px;letter-spacing:.5px">C6EXT_PARTIAL_O2_VER5_Q</div>
<div class="a" style="left:16px;top:425px;width:24px;height:0;border-top:1px dotted #808080"></div>
<svg style="left:40px;top:418px" width="13" height="13"><use href="#cb"/></svg>
<svg style="left:57px;top:417px" width="16" height="16"><use href="#doc"/></svg>
<div class="t v" style="left:77px;top:418px;letter-spacing:.5px">C6EXT_O2_O1_VER6</div>
<div class="a" style="left:16px;top:443px;width:24px;height:0;border-top:1px dotted #808080"></div>
<svg style="left:40px;top:436px" width="13" height="13"><use href="#cb"/></svg>
<svg style="left:57px;top:435px" width="16" height="16"><use href="#doc"/></svg>
<div class="t v" style="left:77px;top:436px;letter-spacing:.5px">C6EXT_PARTIAL_O2_VER6</div>
<div class="a" style="left:16px;top:461px;width:24px;height:0;border-top:1px dotted #808080"></div>
<svg style="left:40px;top:454px" width="13" height="13"><use href="#cb"/></svg>
<svg style="left:57px;top:453px" width="16" height="16"><use href="#doc"/></svg>
<div class="t v" style="left:77px;top:454px;letter-spacing:.5px">C6EXT_O2_ONLY_VER6</div>
<div class="a" style="left:16px;top:479px;width:24px;height:0;border-top:1px dotted #808080"></div>
<svg style="left:40px;top:472px" width="13" height="13"><use href="#cb"/></svg>
<svg style="left:57px;top:471px" width="16" height="16"><use href="#doc"/></svg>
<div class="t v" style="left:77px;top:472px;letter-spacing:.5px">C6EXT_O2_ONLY_VER6_Q</div>
<div class="a" style="left:16px;top:497px;width:10px;height:0;border-top:1px dotted #808080"></div>
<svg style="left:26px;top:493px" width="9" height="9"><use href="#plus"/></svg>
<div class="a" style="left:35px;top:497px;width:5px;height:0;border-top:1px dotted #808080"></div>
<svg style="left:40px;top:489px" width="16" height="16"><use href="#house"/></svg>
<div class="t v b" style="left:60px;top:490px;letter-spacing:.3px">C6EXT_VER6 Cases</div>
<div class="a" style="left:16px;top:515px;width:10px;height:0;border-top:1px dotted #808080"></div>
<svg style="left:26px;top:511px" width="9" height="9"><use href="#plus"/></svg>
<div class="a" style="left:35px;top:515px;width:5px;height:0;border-top:1px dotted #808080"></div>
<svg style="left:40px;top:507px" width="16" height="16"><use href="#house"/></svg>
<div class="t v b" style="left:60px;top:508px;letter-spacing:.3px">Horizontal Obj 2 Cases</div>
<div class="a" style="left:16px;top:533px;width:10px;height:0;border-top:1px dotted #808080"></div>
<svg style="left:26px;top:529px" width="9" height="9"><use href="#plus"/></svg>
<div class="a" style="left:35px;top:533px;width:5px;height:0;border-top:1px dotted #808080"></div>
<svg style="left:40px;top:525px" width="16" height="16"><use href="#house"/></svg>
<div class="t v b" style="left:60px;top:526px;letter-spacing:.3px">Permian Well Phasing</div>
<div class="a" style="left:20px;top:551px;width:6px;height:0;border-top:1px dotted #808080"></div>
<svg style="left:11px;top:547px" width="9" height="9"><use href="#minus"/></svg>
<svg style="left:25px;top:543px" width="16" height="16"><use href="#house"/></svg>
<div class="t v b" style="left:45px;top:543px;font-size:12px;line-height:16px;height:16px">C4 Cases</div>
<div class="a" style="left:16px;top:569px;width:24px;height:0;border-top:1px dotted #808080"></div>
<svg style="left:40px;top:562px" width="13" height="13"><use href="#cb"/></svg>
<svg style="left:57px;top:561px" width="16" height="16"><use href="#doc"/></svg>
<div class="t v" style="left:77px;top:562px;letter-spacing:.5px">C6EXT_45O2REV_20O3_BB</div>
<div class="a" style="left:16px;top:587px;width:24px;height:0;border-top:1px dotted #808080"></div>
<svg style="left:40px;top:580px" width="13" height="13"><use href="#cbx"/></svg>
<svg style="left:57px;top:579px" width="16" height="16"><use href="#doc"/></svg>
<div class="t v" style="left:77px;top:580px;letter-spacing:.5px">C4EXT_45O2REV_20O3_BB_GIVAR</div>
<div class="a" style="left:16px;top:605px;width:24px;height:0;border-top:1px dotted #808080"></div>
<svg style="left:40px;top:598px" width="13" height="13"><use href="#cb"/></svg>
<svg style="left:57px;top:597px" width="16" height="16"><use href="#doc"/></svg>
<div class="t v" style="left:77px;top:598px;letter-spacing:.5px">C4_45O2REV_20O3_BB</div>
<div class="a" style="left:16px;top:623px;width:24px;height:0;border-top:1px dotted #808080"></div>
<svg style="left:40px;top:616px" width="13" height="13"><use href="#cb"/></svg>
<svg style="left:57px;top:615px" width="16" height="16"><use href="#doc"/></svg>
<div class="t v" style="left:77px;top:616px;letter-spacing:.5px">C4_45O2REV_35O3_BB</div>
<div class="a" style="left:16px;top:641px;width:24px;height:0;border-top:1px dotted #808080"></div>
<svg style="left:40px;top:634px" width="13" height="13"><use href="#cb"/></svg>
<svg style="left:57px;top:633px" width="16" height="16"><use href="#doc"/></svg>
<div class="t v" style="left:77px;top:634px;letter-spacing:.5px">C4_45O2REV_20O3_BB_GIVAR</div>
<div class="a" style="left:16px;top:659px;width:24px;height:0;border-top:1px dotted #808080"></div>
<svg style="left:40px;top:652px" width="13" height="13"><use href="#cbx"/></svg>
<svg style="left:57px;top:651px" width="16" height="16"><use href="#doc"/></svg>
<div class="t v" style="left:77px;top:652px;letter-spacing:.5px">C4_45O2REV_20O3_BB_GIVAR_EXT2017_4COMP</div>
<div class="a" style="left:16px;top:677px;width:24px;height:0;border-top:1px dotted #808080"></div>
<svg style="left:40px;top:670px" width="13" height="13"><use href="#cb"/></svg>
<svg style="left:57px;top:669px" width="16" height="16"><use href="#doc"/></svg>
<div class="t v" style="left:77px;top:670px;letter-spacing:.5px">C4_45O2REV_35O3_BB_GIVAR</div>
<div class="a" style="left:16px;top:695px;width:24px;height:0;border-top:1px dotted #808080"></div>
<svg style="left:40px;top:688px" width="13" height="13"><use href="#cb"/></svg>
<svg style="left:57px;top:687px" width="16" height="16"><use href="#pen"/></svg>
<div class="t v" style="left:77px;top:688px;letter-spacing:.5px">C4_45O2REV_20O3_BB_GIVAR</div>
<div class="a" style="left:16px;top:713px;width:10px;height:0;border-top:1px dotted #808080"></div>
<svg style="left:26px;top:709px" width="9" height="9"><use href="#plus"/></svg>
<div class="a" style="left:35px;top:713px;width:5px;height:0;border-top:1px dotted #808080"></div>
<svg style="left:40px;top:705px" width="16" height="16"><use href="#house"/></svg>
<div class="t v b" style="left:60px;top:706px;letter-spacing:.3px">Further C4 Sensitivities</div>
<div class="a" style="left:20px;top:731px;width:6px;height:0;border-top:1px dotted #808080"></div>
<svg style="left:11px;top:727px" width="9" height="9"><use href="#minus"/></svg>
<svg style="left:25px;top:723px" width="16" height="16"><use href="#house"/></svg>
<div class="t v b" style="left:45px;top:723px;font-size:12px;line-height:16px;height:16px">PHASE3 Delayed at 2010</div>
<div class="a" style="left:0;top:740px;width:336px;height:18px;background:linear-gradient(#f4f4f4,#e2e2e2);border-radius:3px"></div>
<div class="a" style="left:16px;top:749px;width:24px;height:0;border-top:1px dotted #808080"></div>
<svg style="left:40px;top:742px" width="13" height="13"><use href="#cb"/></svg>
<svg style="left:57px;top:741px" width="16" height="16"><use href="#pen"/></svg>
<div class="t v" style="left:77px;top:742px;letter-spacing:.5px">C6EXT_45O2REV_20O3_BB_GIVAR</div>
<div class="a" style="left:16px;top:767px;width:24px;height:0;border-top:1px dotted #808080"></div>
<svg style="left:40px;top:760px" width="13" height="13"><use href="#cb"/></svg>
<svg style="left:57px;top:759px" width="16" height="16"><use href="#doc"/></svg>
<div class="t v" style="left:77px;top:760px;letter-spacing:.5px">C6EXT_45O2REV_20O3_BB_P3</div>
<div class="a" style="left:16px;top:785px;width:24px;height:0;border-top:1px dotted #808080"></div>
<svg style="left:40px;top:778px" width="13" height="13"><use href="#cb"/></svg>
<svg style="left:57px;top:777px" width="16" height="16"><use href="#doc"/></svg>
<div class="t v" style="left:77px;top:778px;letter-spacing:.5px">C6EXT_45O2REV_20O3_BB_P3B</div>
<div class="a" style="left:20px;top:803px;width:6px;height:0;border-top:1px dotted #808080"></div>
<svg style="left:11px;top:799px" width="9" height="9"><use href="#plus"/></svg>
<svg style="left:25px;top:795px" width="16" height="16"><use href="#house"/></svg>
<div class="t v b" style="left:45px;top:795px;font-size:12px;line-height:16px;height:16px">Cases to compare big b</div>
<div class="a" style="left:20px;top:821px;width:6px;height:0;border-top:1px dotted #808080"></div>
<svg style="left:11px;top:817px" width="9" height="9"><use href="#plus"/></svg>
<svg style="left:25px;top:813px" width="16" height="16"><use href="#house"/></svg>
<div class="t v b" style="left:45px;top:813px;font-size:12px;line-height:16px;height:16px">No Gas Injection Cases</div>
<div class="a" style="left:20px;top:839px;width:6px;height:0;border-top:1px dotted #808080"></div>
<svg style="left:11px;top:835px" width="9" height="9"><use href="#plus"/></svg>
<svg style="left:25px;top:831px" width="16" height="16"><use href="#house"/></svg>
<div class="t v b" style="left:45px;top:831px;font-size:12px;line-height:16px;height:16px">Sensitivities Increasing</div>
<div class="a" style="left:20px;top:857px;width:6px;height:0;border-top:1px dotted #808080"></div>
<svg style="left:11px;top:853px" width="9" height="9"><use href="#plus"/></svg>
<svg style="left:25px;top:849px" width="16" height="16"><use href="#house"/></svg>
<div class="t v b" style="left:45px;top:849px;font-size:12px;line-height:16px;height:16px">VAR2 Base with Revised</div>
<div class="a" style="left:20px;top:875px;width:6px;height:0;border-top:1px dotted #808080"></div>
<svg style="left:11px;top:871px" width="9" height="9"><use href="#plus"/></svg>
<svg style="left:25px;top:867px" width="16" height="16"><use href="#house"/></svg>
<div class="t v b" style="left:45px;top:867px;font-size:12px;line-height:16px;height:16px">P2M Cases</div>
<div class="a" style="left:20px;top:893px;width:6px;height:0;border-top:1px dotted #808080"></div>
<svg style="left:11px;top:889px" width="9" height="9"><use href="#minus"/></svg>
<svg style="left:25px;top:885px" width="16" height="16"><use href="#house"/></svg>
<div class="t v b" style="left:45px;top:885px;font-size:12px;line-height:16px;height:16px">HM2007_V92</div>
<div class="a" style="left:16px;top:911px;width:24px;height:0;border-top:1px dotted #808080"></div>
<svg style="left:40px;top:904px" width="13" height="13"><use href="#cb"/></svg>
<svg style="left:57px;top:903px" width="16" height="16"><use href="#doc"/></svg>
<div class="t v" style="left:77px;top:904px;letter-spacing:.5px">HM2007_V92</div>
<div class="a" style="left:16px;top:929px;width:24px;height:0;border-top:1px dotted #808080"></div>
<svg style="left:40px;top:922px" width="13" height="13"><use href="#cb"/></svg>
<svg style="left:57px;top:921px" width="16" height="16"><use href="#pen"/></svg>
<div class="t v" style="left:77px;top:922px;letter-spacing:.5px">HM2007_V92_PRED</div>
<div class="a" style="left:16px;top:947px;width:24px;height:0;border-top:1px dotted #808080"></div>
<svg style="left:40px;top:940px" width="13" height="13"><use href="#cb"/></svg>
<svg style="left:57px;top:939px" width="16" height="16"><use href="#doc"/></svg>
<div class="t v" style="left:77px;top:940px;letter-spacing:.5px">C6EXT_HM2007_V92</div>
<div class="a" style="left:16px;top:965px;width:24px;height:0;border-top:1px dotted #808080"></div>
<svg style="left:40px;top:958px" width="13" height="13"><use href="#cb"/></svg>
<svg style="left:57px;top:957px" width="16" height="16"><use href="#doc"/></svg>
<div class="t v" style="left:77px;top:958px;letter-spacing:.5px">C6EXT_HM2007_V92_NOGIVAR</div>
</div>
<div class="sbtrack" style="left:340px;top:82px;width:17px;height:976px"></div>
<div class="sbbtn" style="left:341px;top:83px;width:15px;height:16px"></div>
<svg style="left:344px;top:88px" width="9" height="6"><path d="M1 5L4.5 1.5 8 5" fill="none" stroke="#4d6185" stroke-width="1.8"/></svg>
<div class="sbthumb" style="left:341px;top:100px;width:15px;height:930px"></div>
<div class="sbbtn" style="left:341px;top:1041px;width:15px;height:16px"></div>
<svg style="left:344px;top:1046px" width="9" height="6"><path d="M1 1L4.5 4.5 8 1" fill="none" stroke="#4d6185" stroke-width="1.8"/></svg>
<div class="a" style="left:339px;top:1058px;width:18px;height:19px;background:#e4e4e4"></div>
<div class="a" style="left:3px;top:1058px;width:337px;height:18px;background:linear-gradient(#dedede,#f6f6f6 70%)"></div>
<div class="sbbtn" style="left:4px;top:1059px;width:15px;height:16px"></div>
<svg style="left:8px;top:1063px" width="6" height="9"><path d="M5 1L1.5 4.5 5 8" fill="none" stroke="#4d6185" stroke-width="1.8"/></svg>
<div class="sbthumb" style="left:20px;top:1059px;width:199px;height:16px;background:linear-gradient(#fefefe,#d9d9d9)"></div>
<div class="a" style="left:115px;top:1064px;width:8px;height:6px;background:repeating-linear-gradient(90deg,#8a8a8a 0 1px,transparent 1px 2px)"></div>
<div class="sbbtn" style="left:322px;top:1059px;width:16px;height:16px"></div>
<svg style="left:327px;top:1063px" width="6" height="9"><path d="M1 1L4.5 4.5 1 8" fill="none" stroke="#4d6185" stroke-width="1.8"/></svg>
<div class="a" style="left:0;top:1170px;width:1600px;height:30px;background:linear-gradient(#1a1a1a 0,#707070 1px,#666 3px,#4a4a4a 16px,#3a3a3a 18px,#2a2a2a 30px)"></div>
<div class="a" style="left:0;top:1170px;width:98px;height:30px;border-radius:0 12px 14px 0/0 14px 16px 0;background:linear-gradient(#f8a060 0,#e86a20 4px,#e05a10 14px,#c84a08 24px,#a83a04 30px);box-shadow:inset -3px 0 4px rgba(120,40,0,.6),1px 0 2px #000"></div>
<svg style="left:10px;top:1175px" width="22" height="20" viewBox="0 0 22 20"><path d="M3 3.500c2.500-1.600 4.500-1.400 6.800 0l-1.600 6c-2.200-1.300-4.300-1.400-6.800 0z" fill="#e8502a"/><path d="M11.200 4c2.300 1.300 4.500 1.300 6.800 0l-1.600 6c-2.300 1.300-4.500 1.300-6.800 0z" fill="#6ac23a"/><path d="M1 11c2.500-1.400 4.600-1.300 6.800 0l-1.600 6c-2.200-1.300-4.300-1.400-6.800 0z" fill="#3a7ae8"/><path d="M9.200 11.600c2.300 1.300 4.500 1.300 6.800 0l-1.600 6c-2.300 1.300-4.500 1.300-6.800 0z" fill="#f8c82a"/></svg>
<div class="t b w" style="left:34px;top:1173px;font-family:'Liberation Sans',sans-serif;font-style:italic;font-size:18.500px;line-height:24px;height:24px;letter-spacing:-.7px;text-shadow:1px 1px 1px rgba(60,20,0,.8)">start</div>
<svg style="left:109px;top:1177px" width="16" height="16" viewBox="0 0 16 16"><rect x="1" y="2" width="14" height="12" rx="2" fill="#2a6ad8"/><rect x="3" y="4" width="10" height="8" fill="#e8f0ff"/><path d="M5 8a3 3 0 1 0 6 0" fill="none" stroke="#2a6ad8" stroke-width="1.500"/></svg>
<svg style="left:132px;top:1177px" width="16" height="16" viewBox="0 0 16 16"><path d="M1 4h5l1.500 1.500H15V14H1z" fill="#f4c84a" stroke="#b8861a" stroke-width=".8"/><path d="M1 7h14" stroke="#fbe08a"/></svg>
<svg style="left:155px;top:1177px" width="16" height="16" viewBox="0 0 16 16"><rect x="1" y="1" width="14" height="14" rx="1.500" fill="#f8b830" stroke="#c8780a"/><circle cx="8" cy="8" r="5" fill="#fff6d8" stroke="#c8780a"/><path d="M8 4.500V8h3" fill="none" stroke="#a85a00" stroke-width="1.200"/></svg>
<svg style="left:179px;top:1177px" width="16" height="16" viewBox="0 0 16 16"><circle cx="8" cy="8.500" r="5.500" fill="none" stroke="#2a8af0" stroke-width="3"/><path d="M4 8.500h9" stroke="#2a8af0" stroke-width="2"/><path d="M1 12C3 4 10 1 15 3" fill="none" stroke="#f4c020" stroke-width="1.500"/></svg>
<svg style="left:202px;top:1177px" width="16" height="16" viewBox="0 0 16 16"><rect x="1" y="1" width="14" height="14" fill="#2a5ac8"/><rect x="5" y="3" width="9" height="10" fill="#dfe8fa"/><text x="2" y="12" font-family="Liberation Serif,serif" font-weight="bold" font-style="italic" font-size="11" fill="#fff" stroke="#1a3a9a" stroke-width=".4">W</text></svg>
<svg style="left:224px;top:1177px" width="16" height="16" viewBox="0 0 16 16"><rect x="1" y="1" width="14" height="14" fill="#1f8a3a"/><rect x="5" y="3" width="9" height="10" fill="#e0f4e4"/><path d="M3 4l7 8M10 4l-7 8" stroke="#fff" stroke-width="2.200"/><path d="M3 4l7 8M10 4l-7 8" stroke="#1f8a3a" stroke-width=".8"/></svg>
<svg style="left:247px;top:1177px" width="16" height="16" viewBox="0 0 16 16"><rect x="1" y="1" width="14" height="14" fill="#d8502a"/><rect x="3" y="3" width="10" height="10" fill="#fbe4dc"/><circle cx="8" cy="9" r="3.500" fill="#d8502a"/><path d="M8 9V5.500A3.500 3.500 0 0 1 11.500 9z" fill="#f8b8a0"/></svg>
<svg style="left:270px;top:1177px" width="16" height="16" viewBox="0 0 16 16"><rect x="0" y="2" width="16" height="12" fill="#0a0a0a" stroke="#b8c8e8" stroke-width="1"/><text x="1.500" y="11" font-family="Liberation Mono,monospace" font-weight="bold" font-size="7" fill="#fff">C:\</text></svg>
<svg style="left:293px;top:1177px" width="16" height="16" viewBox="0 0 16 16"><rect x="1" y="1" width="14" height="14" rx="1.500" fill="#f8b830" stroke="#c8780a"/><circle cx="8" cy="8" r="5" fill="#fff6d8" stroke="#c8780a"/><path d="M8 4.500V8h3" fill="none" stroke="#a85a00" stroke-width="1.200"/></svg>
<div class="a" style="left:402px;top:1175px;width:93px;height:23px;border-radius:3px;background:linear-gradient(#555,#444 50%,#363636 55%,#303030);border:1px solid #1e1e1e;box-shadow:inset 0 1px 0 #6a6a6a"></div>
<svg style="left:410px;top:1178px" width="16" height="16" viewBox="0 0 16 16"><rect x="0" y="0" width="16" height="16" fill="#fff" stroke="#222"/><rect x="1" y="8" width="14" height="7" fill="#111"/><text x="1.500" y="14.500" font-family="Liberation Sans,sans-serif" font-weight="bold" font-size="6.500" fill="#fff">VNC</text><path d="M2 2l4 4M6 2l-4 4M9 2h5v4H9z" stroke="#223" fill="none"/></svg>
<div class="t w" style="left:430px;top:1179px">gavana'...</div>
<div class="a" style="left:498px;top:1175px;width:93px;height:23px;border-radius:3px;background:linear-gradient(#555,#444 50%,#363636 55%,#303030);border:1px solid #1e1e1e;box-shadow:inset 0 1px 0 #6a6a6a"></div>
<svg style="left:506px;top:1178px" width="16" height="16" viewBox="0 0 16 16"><rect x="1" y="1" width="14" height="14" rx="1.500" fill="#f8b830" stroke="#c8780a"/><circle cx="8" cy="8" r="5" fill="#fff6d8" stroke="#c8780a"/><path d="M8 4.500V8h3" fill="none" stroke="#a85a00" stroke-width="1.200"/></svg>
<div class="t w" style="left:526px;top:1179px">Inbox - ...</div>
<div class="a" style="left:594px;top:1175px;width:93px;height:23px;border-radius:3px;background:linear-gradient(#555,#444 50%,#363636 55%,#303030);border:1px solid #1e1e1e;box-shadow:inset 0 1px 0 #6a6a6a"></div>
<svg style="left:602px;top:1178px" width="16" height="16" viewBox="0 0 16 16"><path d="M4 1c4-1 7 1 6 4-1 2-5 2-5 4s4 2 7 1c2 0 3 2 1 4-3 2-9 2-11-1 0-2 3-2 3-4S2 7 2 4c0-1 1-2.500 2-3z" fill="#4a9a2a" stroke="#1a5a0a" stroke-width=".7"/><circle cx="6" cy="3" r=".9" fill="#fff"/><path d="M5 11c2 1 5 1 7 0" stroke="#d8d82a" fill="none"/></svg>
<div class="t w" style="left:622px;top:1179px">Python...</div>
<div class="a" style="left:690px;top:1175px;width:93px;height:23px;border-radius:3px;background:linear-gradient(#555,#444 50%,#363636 55%,#303030);border:1px solid #1e1e1e;box-shadow:inset 0 1px 0 #6a6a6a"></div>
<svg style="left:698px;top:1178px" width="16" height="16" viewBox="0 0 16 16"><rect x="0" y="2" width="16" height="12" fill="#0a0a0a" stroke="#b8c8e8" stroke-width="1"/><text x="1.500" y="11" font-family="Liberation Mono,monospace" font-weight="bold" font-size="7" fill="#fff">C:\</text></svg>
<div class="t" style="left:719px;top:1179px;color:#f4d23a">2</div>
<div class="t w" style="left:729px;top:1179px">Win...</div>
<svg style="left:774px;top:1184px" width="6" height="4"><path d="M0 0h6L3 3.500z" fill="#fff"/></svg>
<div class="a" style="left:786px;top:1175px;width:93px;height:23px;border-radius:3px;background:linear-gradient(#555,#444 50%,#363636 55%,#303030);border:1px solid #1e1e1e;box-shadow:inset 0 1px 0 #6a6a6a"></div>
<svg style="left:794px;top:1178px" width="16" height="16" viewBox="0 0 16 16"><path d="M8 1H5.500C4 1 3.500 2 3.500 3v2H8v1H2.500C1 6 .5 7.500.5 9s.5 3 2 3H4v-2c0-1 1-2 2-2h4c1 0 1.500-.8 1.500-1.500V3c0-1-1-2-2-2z" fill="#3a7ab8"/><path d="M8 15h2.500c1.500 0 2-1 2-2v-2H8v-1h5.500c1.500 0 2-1.500 2-3s-.5-3-2-3H12v2c0 1-1 2-2 2H6c-1 0-1.500.8-1.500 1.500V13c0 1 1 2 2 2z" fill="#f8d84a"/></svg>
<div class="t w" style="left:814px;top:1179px">SPSA Al...</div>
<div class="a" style="left:882px;top:1175px;width:93px;height:23px;border-radius:3px;background:linear-gradient(#555,#444 50%,#363636 55%,#303030);border:1px solid #1e1e1e;box-shadow:inset 0 1px 0 #6a6a6a"></div>
<svg style="left:890px;top:1178px" width="16" height="16" viewBox="0 0 16 16"><path d="M1 4h5l1.500 1.500H15V14H1z" fill="#f4c84a" stroke="#b8861a" stroke-width=".8"/><path d="M1 7h14" stroke="#fbe08a"/></svg>
<div class="t" style="left:911px;top:1179px;color:#f4d23a">2</div>
<div class="t w" style="left:921px;top:1179px">Win...</div>
<svg style="left:966px;top:1184px" width="6" height="4"><path d="M0 0h6L3 3.500z" fill="#fff"/></svg>
<div class="a" style="left:978px;top:1175px;width:93px;height:23px;border-radius:3px;background:linear-gradient(#555,#444 50%,#363636 55%,#303030);border:1px solid #1e1e1e;box-shadow:inset 0 1px 0 #6a6a6a"></div>
<svg style="left:986px;top:1178px" width="16" height="16" viewBox="0 0 16 16"><circle cx="8" cy="8.500" r="5.500" fill="none" stroke="#2a8af0" stroke-width="3"/><path d="M4 8.500h9" stroke="#2a8af0" stroke-width="2"/><path d="M1 12C3 4 10 1 15 3" fill="none" stroke="#f4c020" stroke-width="1.500"/></svg>
<div class="t w" style="left:1006px;top:1179px">Infinity7...</div>
<div class="a" style="left:1074px;top:1175px;width:93px;height:23px;border-radius:3px;background:linear-gradient(#555,#444 50%,#363636 55%,#303030);border:1px solid #1e1e1e;box-shadow:inset 0 1px 0 #6a6a6a"></div>
<svg style="left:1082px;top:1178px" width="16" height="16" viewBox="0 0 16 16"><rect x="0" y="2" width="16" height="12" fill="#dfe8e8"/><rect x="0" y="7" width="16" height="7" fill="#1a9a9a"/><rect x="0" y="2" width="16" height="2" fill="#fff"/></svg>
<div class="t w" style="left:1102px;top:1179px">ECLIPSE...</div>
<div class="a" style="left:1170px;top:1175px;width:93px;height:23px;border-radius:3px;background:linear-gradient(#555,#444 50%,#363636 55%,#303030);border:1px solid #1e1e1e;box-shadow:inset 0 1px 0 #6a6a6a"></div>
<svg style="left:1178px;top:1178px" width="16" height="16" viewBox="0 0 16 16"><path d="M8 .5L15.500 8 8 15.500.5 8z" fill="#f4ecd8" stroke="#3a2a1a" stroke-width="1.300"/><path d="M8 4l4 4-4 4-4-4z" fill="#c84a2a" stroke="#5a2a0a" stroke-width=".6"/><path d="M6 8l2-2 2 2-2 2z" fill="#f8d88a"/></svg>
<div class="t w" style="left:1198px;top:1179px">PhotoPl...</div>
<div class="a" style="left:1266px;top:1175px;width:93px;height:23px;border-radius:3px;background:linear-gradient(#555,#444 50%,#363636 55%,#303030);border:1px solid #1e1e1e;box-shadow:inset 0 1px 0 #6a6a6a"></div>
<svg style="left:1274px;top:1178px" width="16" height="16" viewBox="0 0 16 16"><circle cx="8" cy="8" r="7.500" fill="#7a2ac8"/><circle cx="6.500" cy="5.500" r="4" fill="#a86af0" opacity=".6"/><text x="2" y="11" font-family="Liberation Sans,sans-serif" font-weight="bold" font-size="7" fill="#fff">Nvu</text></svg>
<div class="t w" style="left:1294px;top:1179px">Infinity7...</div>
<div class="a" style="left:1362px;top:1175px;width:93px;height:23px;border-radius:3px;background:linear-gradient(#222,#141414);border:1px solid #000;box-shadow:inset 0 1px 0 #3a3a3a"></div>
<svg style="left:1370px;top:1178px" width="16" height="16" viewBox="0 0 16 16"><rect x="3.5" y="3.5" width="11" height="12" fill="#eeeef4" stroke="#c9c9d4" stroke-width=".8"/><path d="M6 .8H15.500V10.300z" fill="#f8b050" stroke="#d88a20" stroke-width=".7"/><path d="M9.500 3h3.800v3.800z" fill="#fde0b0"/><path d="M8.500 9.500h4v5h-4z" fill="none" stroke="#e06060" stroke-width="1"/><path d="M5.500 8l4 4" stroke="#6a9ae0" stroke-width=".9"/><path d="M1.200 10.800L8.800 3.200" stroke="#c06a00" stroke-width="3"/><path d="M1.400 10.600L8.600 3.400" stroke="#ffb030" stroke-width="1.600"/></svg>
<div class="t w" style="left:1390px;top:1179px">K-SVR v...</div>
<div class="a" style="left:1470px;top:1171px;width:130px;height:29px;background:linear-gradient(#6a6a6a 0,#5c5c5c 3px,#424242 16px,#343434 18px,#262626 29px);border-left:1px solid #1a1a1a;box-shadow:inset 1px 0 0 #666"></div>
<svg style="left:1465px;top:1178px" width="15" height="15" viewBox="0 0 15 15"><circle cx="7.500" cy="7.500" r="7" fill="#3a3a3a" stroke="#6a6a6a"/><path d="M9 4L5.500 7.500 9 11" fill="none" stroke="#ddd" stroke-width="1.800"/></svg>
<svg style="left:1482px;top:1178px" width="16" height="16" viewBox="0 0 16 16"><rect x="3.5" y="3.5" width="11" height="12" fill="#eeeef4" stroke="#c9c9d4" stroke-width=".8"/><path d="M6 .8H15.500V10.300z" fill="#f8b050" stroke="#d88a20" stroke-width=".7"/><path d="M9.500 3h3.800v3.800z" fill="#fde0b0"/><path d="M8.500 9.500h4v5h-4z" fill="none" stroke="#e06060" stroke-width="1"/><path d="M5.500 8l4 4" stroke="#6a9ae0" stroke-width=".9"/><path d="M1.200 10.800L8.800 3.200" stroke="#c06a00" stroke-width="3"/><path d="M1.400 10.600L8.600 3.400" stroke="#ffb030" stroke-width="1.600"/></svg>
<svg style="left:1500px;top:1178px" width="16" height="16" viewBox="0 0 16 16"><rect x="1" y="1" width="14" height="14" rx="1.500" fill="#f8b830" stroke="#c8780a"/><circle cx="8" cy="8" r="5" fill="#fff6d8" stroke="#c8780a"/><path d="M8 4.500V8h3" fill="none" stroke="#a85a00" stroke-width="1.200"/></svg>
<svg style="left:1518px;top:1178px" width="16" height="16" viewBox="0 0 16 16"><circle cx="6" cy="6" r="5" fill="#9a9a9a" stroke="#ddd"/><circle cx="6" cy="6" r="2" fill="#444"/><path d="M9 9l5 5" stroke="#3a6ad8" stroke-width="2"/><path d="M11 8c2 1 3 3 3 5" stroke="#aaa" fill="none"/></svg>
<svg style="left:1536px;top:1178px" width="16" height="16" viewBox="0 0 16 16"><rect x="1" y="5" width="9" height="7" fill="#2a4ad8" stroke="#dde"/><rect x="6" y="1" width="9" height="7" fill="#3ab8d8" stroke="#dde"/><path d="M2 14h8M10 10h5" stroke="#f4d23a" stroke-width="1.500"/></svg>
<div class="t w" style="left:1559px;top:1179px">16:50</div>
<div class="a" style="left:200px;top:135px;width:1200px;height:900px;background:#151515;border-radius:7px 7px 0 0;box-shadow:2px 2px 2px 1px rgba(0,0,0,.3)"></div>
<div class="a" style="left:201px;top:160px;width:1198px;height:873px;border:1px solid #707070;border-top:none"></div>
<div class="a" style="left:201px;top:136px;width:1198px;height:29px;border-radius:6px 6px 0 0;background:linear-gradient(#808080 0,#707070 2px,#5e5e5e 13px,#3c3c3c 14px,#2c2c2c 27px,#1a1a1a 29px)"></div>
<svg style="left:206px;top:142px" width="17" height="16" viewBox="0 0 17 16"><rect x="3.5" y="3.5" width="11" height="12" fill="#eeeef4" stroke="#c9c9d4" stroke-width=".8"/><path d="M6 .8H15.500V10.300z" fill="#f8b050" stroke="#d88a20" stroke-width=".7"/><path d="M9.500 3h3.800v3.800z" fill="#fde0b0"/><path d="M8.500 9.500h4v5h-4z" fill="none" stroke="#e06060" stroke-width="1"/><path d="M5.500 8l4 4" stroke="#6a9ae0" stroke-width=".9"/><path d="M1.200 10.800L8.800 3.200" stroke="#c06a00" stroke-width="3"/><path d="M1.400 10.600L8.600 3.400" stroke="#ffb030" stroke-width="1.600"/></svg>
<div class="t b w" style="left:225px;top:145px;letter-spacing:-.45px;text-shadow:1px 1px 0 #000">User Progressive Plots</div>
<div class="a" style="left:1328px;top:142px;width:19px;height:19px;border-radius:3px;background:linear-gradient(#5e5e5e,#4a4a4a 45%,#303030 55%,#2a2a2a);border:1px solid #6a6a6a"></div>
<div class="a" style="left:1351px;top:142px;width:19px;height:19px;border-radius:3px;background:linear-gradient(#5e5e5e,#4a4a4a 45%,#303030 55%,#2a2a2a);border:1px solid #6a6a6a"></div>
<div class="a" style="left:1374px;top:142px;width:19px;height:19px;border-radius:3px;background:linear-gradient(#f08a6a,#e8603a 45%,#d83a14 55%,#e04a20);border:1px solid #f0a890"></div>
<div class="a" style="left:1332px;top:153px;width:8px;height:4px;background:#fff"></div>
<svg style="left:1355px;top:146px" width="12" height="11"><rect x="1" y="1" width="10" height="9" fill="none" stroke="#fff" stroke-width="1.4"/><path d="M1 2h10" stroke="#fff" stroke-width="2.4"/></svg>
<svg style="left:1378px;top:146px" width="11" height="11"><path d="M1 1l9 9M10 1l-9 9" stroke="#fff" stroke-width="2"/></svg>
<div class="a" style="left:204px;top:165px;width:1192px;height:36px;background:linear-gradient(#d0d0d0 0,#b8b8b8 1px,#a4a4a4 5px,#8e8e8e 13px,#747474 23px,#505050 31px,#3a3a3a 35px,#303030 36px)"></div>
<div class="t" style="left:219px;top:175px"><u>F</u>ile</div>
<svg style="left:1380px;top:183px" width="9" height="8" viewBox="0 0 9 8"><path d="M0.5 5L4.5 1L8.500 5Z" fill="#fff" stroke="#000" stroke-width=".6"/><path d="M0 7h9" stroke="#000" stroke-width="1.400"/></svg>
<div class="a" style="left:204px;top:201px;width:1192px;height:830px;background:#e4e4e4"></div>

<div class="a" style="left:205px;top:308px;width:1189px;height:698px;border:1px solid #b4b4b4;border-top:none"></div>
<div class="grp" style="left:214px;top:218px;width:697px;height:50px;border-color:#d6d6d6"></div>
<div class="t" style="left:220px;top:211px;color:#0a46d8;background:#e4e4e4;padding:0 2px">User Help</div>
<div class="t v b" style="left:224px;top:233px;letter-spacing:.25px">This Plots Shows Different Properties For The Selected Runs.</div>
<div class="t v b" style="left:224px;top:246px;letter-spacing:.33px">Click On The Tabs On The Left To Switch Property And On The Tab On The Top To See A Table Of Results.</div>
<div class="a" style="left:205px;top:279px;width:1190px;height:31px;background:linear-gradient(#c0c0c0 0,#8c8c8c 1px,#8c8c8c 2px,#cbcbcb 2.500px,#d6d6d6 8px,#ececec 26px,#f2f2f2 30px,#adadad 30px,#adadad 31px)"></div>
<div class="a" style="left:212px;top:285px;width:156px;height:24px;background:linear-gradient(#fdfdfd,#f6f6f6 60%,#ececec);border:1px solid #adadad;border-bottom:none;border-radius:4px 4px 0 0"></div>
<div class="a" style="left:367px;top:285px;width:116px;height:22px;background:linear-gradient(#e6e6e6,#eeeeee 48%,#e0e0e0 50%,#e3e3e3);border:1px solid #adadad;border-radius:3px 3px 0 0"></div>
<svg style="left:220px;top:288px" width="16" height="16" viewBox="0 0 16 16"><rect x=".5" y=".5" width="15" height="15" fill="#f2f2f2" stroke="#8a8a8a"/><path d="M8 1v14M1 8h14" stroke="#b8b8b8"/><path d="M2 8c2-5 4-5 6 0s4 5 6 0" fill="none" stroke="#e04848" stroke-width="1.2"/></svg>
<div class="t b" style="left:241px;top:289px">Progressive Plots</div>
<svg style="left:353px;top:293px" width="9" height="9"><path d="M.5.5l8 8M8.500.5l-8 8" stroke="#555" stroke-width="1.300"/></svg>
<svg style="left:374px;top:288px" width="17" height="16" viewBox="0 0 17 16"><rect x="3.500" y="2.500" width="13" height="13" fill="#f6faff" stroke="#5a8ad8"/><path d="M3.500 6.500h13M3.500 9.500h13M3.500 12.500h13M8 5v10.500M12 5v10.500" stroke="#a8c6f0" stroke-width=".9"/><path d="M6.500 4.500h8" stroke="#5ac05a" stroke-width="1.200"/><rect x=".5" y=".5" width="5.500" height="8" rx="1.800" fill="#f4f4f4" stroke="#a0a0a0"/><path d="M2.500 2.500v4M4 2.500v4" stroke="#c8c8c8" stroke-width=".8"/></svg>
<div class="t" style="left:397px;top:289px">Table Results</div>
<svg style="left:1379px;top:293px" width="10" height="7"><path d="M1 .7h8" stroke="#000" stroke-width="1.500"/><path d="M1 2.500h8L5 6.500z" fill="#000"/></svg>
<div class="a" style="left:209px;top:312px;width:183px;height:692px;background:#fff;border:1px solid #9db4c4"></div>
<div class="a" style="left:212px;top:315px;width:179px;height:20px;border:1px solid #93a5b6;border-bottom:1.5px solid #8499ad;border-right:none;border-radius:3px 0 0 4px;background:linear-gradient(#fbfbfb 0,#f0f0f0 8px,#dadada 9px,#e4e4e4 14px,#f2f2f2 19px)"></div>
<div class="t" style="left:243px;top:320px;letter-spacing:-.25px">Cumulative Oil Production</div>
<svg style="left:220px;top:316px" width="18" height="18" viewBox="0 0 18 18"><path d="M5 .5C5.300 4 6 6 7.400 7.600A4.200 4.200 0 1 1 2.600 7.600C4 6 4.700 4 5 .5z" fill="#2fc81f" stroke="#157a0a" stroke-width=".6"/><ellipse cx="3.600" cy="10.500" rx="1.300" ry="1.800" fill="#fff" opacity=".6"/><path d="M9 2h6M12 2v6" stroke="#0a7a0a" stroke-width="1.800"/></svg>
<div class="a" style="left:210px;top:337px;width:181px;height:20px;background:linear-gradient(#f8a428 0,#f8b850 2px,#a6daf8 3px,#8cccf4 9px,#74bcf0 10px,#9adcfc 17px,#b4ecff 19px,#9cc 20px)"></div>
<div class="t" style="left:240px;top:341px;letter-spacing:-.25px">Oil Plateau Length</div>
<svg style="left:217px;top:338px" width="18" height="18" viewBox="0 0 18 18"><rect x="1" y="1" width="3.500" height="9" rx="1" fill="#8ab4f0" stroke="#4a74c0" stroke-width=".6"/><rect x="5" y="6" width="3.500" height="7" rx="1" fill="#f07070" stroke="#b03030" stroke-width=".6"/><rect x="8.500" y="2.500" width="4" height="11.500" rx="1" fill="#7ae07a" stroke="#3a9a3a" stroke-width=".6"/></svg>
<div class="a" style="left:212px;top:357px;width:179px;height:20px;border:1px solid #93a5b6;border-bottom:1.5px solid #8499ad;border-right:none;border-radius:3px 0 0 4px;background:linear-gradient(#fbfbfb 0,#f0f0f0 8px,#dadada 9px,#e4e4e4 14px,#f2f2f2 19px)"></div>
<div class="t" style="left:243px;top:362px;letter-spacing:-.25px">Maximum Oil Production</div>
<svg style="left:220px;top:358px" width="18" height="18" viewBox="0 0 18 18"><path d="M8 .8L15.200 8.200H11.600V15.500H4.400V8.200H.8z" fill="#22e022" stroke="#0a9a0a" stroke-width=".8"/></svg>
<div class="a" style="left:212px;top:378px;width:179px;height:20px;border:1px solid #93a5b6;border-bottom:1.5px solid #8499ad;border-right:none;border-radius:3px 0 0 4px;background:linear-gradient(#fbfbfb 0,#f0f0f0 8px,#dadada 9px,#e4e4e4 14px,#f2f2f2 19px)"></div>
<div class="t" style="left:243px;top:383px;letter-spacing:-.25px">Cumulative Gas Production</div>
<svg style="left:220px;top:379px" width="18" height="18" viewBox="0 0 18 18"><path d="M5 .5C5.300 4 6 6 7.400 7.600A4.200 4.200 0 1 1 2.600 7.600C4 6 4.700 4 5 .5z" fill="#e81a1a" stroke="#8a0a0a" stroke-width=".6"/><ellipse cx="3.600" cy="10.500" rx="1.300" ry="1.800" fill="#fff" opacity=".6"/><path d="M9 2h6M12 2v6" stroke="#a00a0a" stroke-width="1.800"/></svg>
<div class="a" style="left:212px;top:399px;width:179px;height:20px;border:1px solid #93a5b6;border-bottom:1.5px solid #8499ad;border-right:none;border-radius:3px 0 0 4px;background:linear-gradient(#fbfbfb 0,#f0f0f0 8px,#dadada 9px,#e4e4e4 14px,#f2f2f2 19px)"></div>
<div class="t" style="left:243px;top:404px;letter-spacing:-.25px">Maximum Gas Production</div>
<svg style="left:220px;top:400px" width="18" height="18" viewBox="0 0 18 18"><path d="M8 .8L15.200 8.200H11.600V15.500H4.400V8.200H.8z" fill="#f01a1a" stroke="#9a0a0a" stroke-width=".8"/></svg>
<div class="a" style="left:212px;top:420px;width:179px;height:20px;border:1px solid #93a5b6;border-bottom:1.5px solid #8499ad;border-right:none;border-radius:3px 0 0 4px;background:linear-gradient(#fbfbfb 0,#f0f0f0 8px,#dadada 9px,#e4e4e4 14px,#f2f2f2 19px)"></div>
<div class="t" style="left:243px;top:425px;letter-spacing:-.25px">Cumulative Water Production</div>
<svg style="left:220px;top:421px" width="18" height="18" viewBox="0 0 18 18"><path d="M5 .5C5.300 4 6 6 7.400 7.600A4.200 4.200 0 1 1 2.600 7.600C4 6 4.700 4 5 .5z" fill="#2a8af8" stroke="#0a3a9a" stroke-width=".6"/><ellipse cx="3.600" cy="10.500" rx="1.300" ry="1.800" fill="#fff" opacity=".6"/><path d="M9 2h6M12 2v6" stroke="#0a0a8a" stroke-width="1.800"/></svg>
<div class="a" style="left:212px;top:441px;width:179px;height:20px;border:1px solid #93a5b6;border-bottom:1.5px solid #8499ad;border-right:none;border-radius:3px 0 0 4px;background:linear-gradient(#fbfbfb 0,#f0f0f0 8px,#dadada 9px,#e4e4e4 14px,#f2f2f2 19px)"></div>
<div class="t" style="left:243px;top:446px;letter-spacing:-.25px">Maximum Water Production</div>
<svg style="left:220px;top:442px" width="18" height="18" viewBox="0 0 18 18"><path d="M8 .8L15.200 8.200H11.600V15.500H4.400V8.200H.8z" fill="#1a3af0" stroke="#0a0a9a" stroke-width=".8"/></svg>
<div class="a" style="left:212px;top:462px;width:179px;height:20px;border:1px solid #93a5b6;border-bottom:1.5px solid #8499ad;border-right:none;border-radius:3px 0 0 4px;background:linear-gradient(#fbfbfb 0,#f0f0f0 8px,#dadada 9px,#e4e4e4 14px,#f2f2f2 19px)"></div>
<div class="t" style="left:243px;top:467px;letter-spacing:-.25px">Simulation Time</div>
<svg style="left:220px;top:463px" width="18" height="18" viewBox="0 0 18 18"><circle cx="3" cy="2.800" r="2.200" fill="#e8c060"/><circle cx="13" cy="2.800" r="2.200" fill="#e8c060"/><circle cx="8" cy="9" r="6.200" fill="#f4f8fc" stroke="#4a88d4" stroke-width="2.200"/><path d="M8 5.500v3.800l2.600-1.600" fill="none" stroke="#555" stroke-width="1.100"/><path d="M3.500 15l-1 1.800M12.500 15l1 1.800" stroke="#b0b0b0" stroke-width="1.600"/></svg>
<div class="a" style="left:212px;top:483px;width:179px;height:20px;border:1px solid #93a5b6;border-bottom:1.5px solid #8499ad;border-right:none;border-radius:3px 0 0 4px;background:linear-gradient(#fbfbfb 0,#f0f0f0 8px,#dadada 9px,#e4e4e4 14px,#f2f2f2 19px)"></div>
<div class="t" style="left:243px;top:488px;letter-spacing:-.25px">Existing Producers</div>
<svg style="left:220px;top:484px" width="18" height="18" viewBox="0 0 18 18"><ellipse cx="8" cy="13" rx="7" ry="3.500" fill="#f0c060" stroke="#b8862a" stroke-width=".7"/><path d="M5 12l-1-7M9 13l2-8M11 12l3-4" stroke="#6a4a2a" stroke-width="1.100"/><circle cx="4" cy="4" r="1.800" fill="#f08030"/><circle cx="11.200" cy="3.800" r="1.800" fill="#f08030"/><circle cx="14" cy="7.500" r="1.500" fill="#f0a040"/></svg>
<div class="a" style="left:212px;top:504px;width:179px;height:20px;border:1px solid #93a5b6;border-bottom:1.5px solid #8499ad;border-right:none;border-radius:3px 0 0 4px;background:linear-gradient(#fbfbfb 0,#f0f0f0 8px,#dadada 9px,#e4e4e4 14px,#f2f2f2 19px)"></div>
<div class="t" style="left:243px;top:509px;letter-spacing:-.25px">New Object 2 Wells</div>
<svg style="left:220px;top:505px" width="18" height="18" viewBox="0 0 18 18"><circle cx="8" cy="8.500" r="6.300" fill="#f0c020" stroke="#b88a10" stroke-width=".8"/><ellipse cx="8" cy="5.500" rx="4.400" ry="2.400" fill="#fdeea0" opacity=".7"/><text x="5" y="12" font-family="Liberation Sans,sans-serif" font-weight="bold" font-size="10" fill="#e01818">2</text></svg>
<div class="a" style="left:212px;top:525px;width:179px;height:20px;border:1px solid #93a5b6;border-bottom:1.5px solid #8499ad;border-right:none;border-radius:3px 0 0 4px;background:linear-gradient(#fbfbfb 0,#f0f0f0 8px,#dadada 9px,#e4e4e4 14px,#f2f2f2 19px)"></div>
<div class="t" style="left:243px;top:530px;letter-spacing:-.25px">New Object 3 Wells</div>
<svg style="left:220px;top:526px" width="18" height="18" viewBox="0 0 18 18"><circle cx="8" cy="8.500" r="6.300" fill="#f0c020" stroke="#b88a10" stroke-width=".8"/><ellipse cx="8" cy="5.500" rx="4.400" ry="2.400" fill="#fdeea0" opacity=".7"/><text x="5" y="12" font-family="Liberation Sans,sans-serif" font-weight="bold" font-size="10" fill="#e01818">3</text></svg>
<div class="a" style="left:212px;top:546px;width:179px;height:20px;border:1px solid #93a5b6;border-bottom:1.5px solid #8499ad;border-right:none;border-radius:3px 0 0 4px;background:linear-gradient(#fbfbfb 0,#f0f0f0 8px,#dadada 9px,#e4e4e4 14px,#f2f2f2 19px)"></div>
<div class="t" style="left:243px;top:551px;letter-spacing:-.25px">Existing Injectors</div>
<svg style="left:220px;top:547px" width="18" height="18" viewBox="0 0 18 18"><path d="M2 3l12 12" stroke="#8aa8c8" stroke-width="3.200"/><path d="M2 3l12 12" stroke="#dce8f4" stroke-width="1.600"/><path d="M1 6l5-5M11 15l4 2-2-4" stroke="#5a7a9a" stroke-width="1.200" fill="#f0c040"/><path d="M5 6l2 2M7 8l2 2" stroke="#f0b030" stroke-width="1.400"/><circle cx="13" cy="4" r="2.600" fill="none" stroke="#1a1ad8" stroke-width="1.600"/></svg>
<div class="a" style="left:212px;top:567px;width:179px;height:20px;border:1px solid #93a5b6;border-bottom:1.5px solid #8499ad;border-right:none;border-radius:3px 0 0 4px;background:linear-gradient(#fbfbfb 0,#f0f0f0 8px,#dadada 9px,#e4e4e4 14px,#f2f2f2 19px)"></div>
<div class="t" style="left:243px;top:572px;letter-spacing:-.25px">New Injectors</div>
<svg style="left:220px;top:568px" width="18" height="18" viewBox="0 0 18 18"><path d="M2 3l12 12" stroke="#8aa8c8" stroke-width="3.200"/><path d="M2 3l12 12" stroke="#dce8f4" stroke-width="1.600"/><path d="M1 6l5-5M11 15l4 2-2-4" stroke="#5a7a9a" stroke-width="1.200" fill="#f0c040"/><path d="M5 6l2 2M7 8l2 2" stroke="#f0b030" stroke-width="1.400"/><text x="9.500" y="7.500" font-family="Liberation Sans,sans-serif" font-weight="bold" font-size="9" fill="#e01010">N</text></svg>
<svg style="left:0;top:0" width="1600" height="1200" viewBox="0 0 1600 1200" font-family="DejaVu Sans,Liberation Sans,sans-serif">
<rect x="493" y="378" width="798" height="526" fill="#fff"/>
<path d="M653.5 378V904" stroke="#000" stroke-width="1" stroke-dasharray="2 3.6"/>
<path d="M812.5 378V904" stroke="#000" stroke-width="1" stroke-dasharray="2 3.6"/>
<path d="M972.5 378V904" stroke="#000" stroke-width="1" stroke-dasharray="2 3.6"/>
<path d="M1131.5 378V904" stroke="#000" stroke-width="1" stroke-dasharray="2 3.6"/>
<path d="M493 860.5H1291" stroke="#000" stroke-width="1" stroke-dasharray="2 3.6"/>
<path d="M493 762.5H1291" stroke="#000" stroke-width="1" stroke-dasharray="2 3.6"/>
<path d="M493 665.5H1291" stroke="#000" stroke-width="1" stroke-dasharray="2 3.6"/>
<path d="M493 567.5H1291" stroke="#000" stroke-width="1" stroke-dasharray="2 3.6"/>
<path d="M493 470.5H1291" stroke="#000" stroke-width="1" stroke-dasharray="2 3.6"/>
<polyline points="653,463 813,430 972,861 1132,715" fill="none" stroke="#0000ff" stroke-width="1.6"/>
<path d="M653.5 463V492M813.5 398V430M972.5 861V888M1132.5 682V715" stroke="#000" stroke-width="1"/>
<path d="M653.5 454L662.5 463L653.5 472L644.5 463Z" fill="#f00" stroke="#000" stroke-width="2"/>
<path d="M813.5 421L822.5 430L813.5 439L804.5 430Z" fill="#f00" stroke="#000" stroke-width="2"/>
<path d="M972.5 852L981.5 861L972.5 870L963.5 861Z" fill="#f00" stroke="#000" stroke-width="2"/>
<path d="M1132.5 706L1141.5 715L1132.5 724L1123.5 715Z" fill="#f00" stroke="#000" stroke-width="2"/>
<rect x="493.5" y="378" width="798" height="526.5" fill="none" stroke="#000" stroke-width="1.6"/>
<path d="M493.5 904v-4M493.5 378v4" stroke="#000" stroke-width="1"/>
<text x="493.5" y="916" font-size="12" text-anchor="middle">0</text>
<path d="M653.5 904v-4M653.5 378v4" stroke="#000" stroke-width="1"/>
<text x="653.5" y="916" font-size="12" text-anchor="middle">1</text>
<path d="M812.5 904v-4M812.5 378v4" stroke="#000" stroke-width="1"/>
<text x="812.5" y="916" font-size="12" text-anchor="middle">2</text>
<path d="M972.5 904v-4M972.5 378v4" stroke="#000" stroke-width="1"/>
<text x="972.5" y="916" font-size="12" text-anchor="middle">3</text>
<path d="M1131.5 904v-4M1131.5 378v4" stroke="#000" stroke-width="1"/>
<text x="1131.5" y="916" font-size="12" text-anchor="middle">4</text>
<path d="M1291.5 904v-4M1291.5 378v4" stroke="#000" stroke-width="1"/>
<text x="1291.5" y="916" font-size="12" text-anchor="middle">5</text>
<path d="M493 860.5h4M1291 860.5h-4" stroke="#000" stroke-width="1"/>
<text x="489" y="864.0" font-size="10" text-anchor="end">0</text>
<path d="M493 762.5h4M1291 762.5h-4" stroke="#000" stroke-width="1"/>
<text x="489" y="766.0" font-size="10" text-anchor="end">1</text>
<path d="M493 665.5h4M1291 665.5h-4" stroke="#000" stroke-width="1"/>
<text x="489" y="669.0" font-size="10" text-anchor="end">2</text>
<path d="M493 567.5h4M1291 567.5h-4" stroke="#000" stroke-width="1"/>
<text x="489" y="571.0" font-size="10" text-anchor="end">3</text>
<path d="M493 470.5h4M1291 470.5h-4" stroke="#000" stroke-width="1"/>
<text x="489" y="474.0" font-size="10" text-anchor="end">4</text>
<text x="892" y="363" font-size="15.3" font-weight="bold" text-anchor="middle">Oil Plateau Length</text>
<text x="892" y="933" font-size="14" font-weight="bold" text-anchor="middle">Number Of Runs</text>
<text transform="translate(477,641) rotate(-90)" font-size="14" font-weight="bold" text-anchor="middle">Oil Plateau Length (Years)</text>
<text x="812" y="391" font-size="8.7" font-weight="bold" text-anchor="middle">C6EXT_O2_O1_VER5_GIVAR_Q</text>
<text x="653" y="503" font-size="8.7" font-weight="bold" text-anchor="middle">C6EXT_O2_O1_GIVAR_NOD_Q</text>
<text x="971" y="901" font-size="8.7" font-weight="bold" text-anchor="middle">C4EXT_45O2REV_20O3_BB_GIVAR</text>
<text x="1131" y="676" font-size="8.7" font-weight="bold" text-anchor="middle">C4_45O2REV_20O3_BB_GIVAR_EXT2017_4COMP</text>
</svg>
<div class="a" style="left:394px;top:969px;width:996px;height:1px;background:#b4b4b4"></div>
<div class="a" style="left:394px;top:971px;width:225px;height:1px;background:#f8f8f8"></div>
<svg style="left:397px;top:977px" width="24" height="24" viewBox="0 0 24 24"><rect width="24" height="24" fill="#e0e0e0"/><path d="M6 12v11h12V12" fill="#f4f4f4" stroke="#9a8a8a"/><path d="M5 3h3v5H5z" fill="#c8a8a8" stroke="#9a6a6a" stroke-width=".6"/><path d="M12 2L1.500 12.500 3 14l9-9 9 9 1.500-1.500z" fill="#a8283a" stroke="#7a1020" stroke-width=".6"/><path d="M9.500 23v-7.500a2.500 2.500 0 0 1 5 0V23z" fill="#f8b84a" stroke="#c8801a" stroke-width=".8"/></svg>
<div class="a" style="left:428px;top:977px;width:24px;height:24px;background:#b2b2b2;border:1px solid #c4c4c4;border-right-color:#efefef;border-bottom-color:#efefef"></div>
<div class="a" style="left:459px;top:977px;width:24px;height:24px;background:#b2b2b2;border:1px solid #c4c4c4;border-right-color:#efefef;border-bottom-color:#efefef"></div>
<svg style="left:490px;top:978px" width="24" height="24" viewBox="0 0 24 24"><path d="M12 4v16M4 12h16" stroke="#0f5f8a" stroke-width="2.600"/><path d="M12 .5l4 4.500H8zM12 23.500l4-4.500H8zM.5 12l4.500-4v8zM23.500 12l-4.500-4v8z" fill="#0f5f8a"/></svg>
<svg style="left:521px;top:977px" width="24" height="24" viewBox="0 0 24 24"><rect width="24" height="24" fill="#e0e0e0"/><rect x="5" y="9" width="16" height="12" fill="#f8fcff" stroke="#9ad0e0"/><circle cx="9" cy="13" r="7" fill="#a8dcec" fill-opacity=".75" stroke="#8ac4d8"/><path d="M6 11h7M6 13.500h7M6 16h7" stroke="#2a8aa8" stroke-width="1.200"/><path d="M14 8l8-5.500" stroke="#f0b060" stroke-width="3.200" stroke-linecap="round"/></svg>
<svg style="left:561px;top:978px" width="24" height="24" viewBox="0 0 24 24"><rect x="2.500" y="2.500" width="18" height="18" rx="2" fill="#a4c0e8" stroke="#000" stroke-width="1.200"/><rect x="3.500" y="3.500" width="5" height="16" fill="#5a8ad0"/><rect x="7" y="8" width="9" height="8" fill="#f4f4f4" stroke="#222" stroke-width="1.200"/><rect x="7.500" y="8" width="8" height="2.500" fill="#4a4a8a"/><path d="M11.500 0l3 3h-6zM11.500 23l3-3h-6zM0 11.500l3-3v6zM23 11.500l-3-3v6z" fill="#3ac83a"/></svg>
<svg style="left:589px;top:977px" width="24" height="24" viewBox="0 0 24 24"><rect width="24" height="24" fill="#e0e0e0"/><path d="M4.500 6.500h13.500l1 1v11.500h-14.500z" fill="#2a6a9a" stroke="#1a4a72"/><rect x="8" y="6.500" width="7" height="2.500" fill="#c8a878"/><rect x="7.500" y="13" width="8.500" height="6" fill="#4a4a52"/><rect x="9" y="14.500" width="2" height="3.500" fill="#a8c8e0"/></svg>
<div class="a" style="left:206px;top:1005px;width:1189px;height:1px;background:#b8b8b8"></div>
<div class="a" style="left:206px;top:1006px;width:1189px;height:25px;background:#f2f2f2;border-top:1px solid #fbfbfb"></div>
<div class="a" style="left:997px;top:1011px;width:1px;height:17px;background:#d0d0d0"></div>
<div class="a" style="left:1392px;top:1019px;width:2px;height:2px;background:#c2c2c8"></div>
<div class="a" style="left:1388px;top:1023px;width:2px;height:2px;background:#c2c2c8"></div>
<div class="a" style="left:1392px;top:1023px;width:2px;height:2px;background:#c2c2c8"></div>
<div class="a" style="left:1384px;top:1027px;width:2px;height:2px;background:#c2c2c8"></div>
<div class="a" style="left:1388px;top:1027px;width:2px;height:2px;background:#c2c2c8"></div>
<div class="a" style="left:1392px;top:1027px;width:2px;height:2px;background:#c2c2c8"></div>
<div class="a" style="left:366px;top:1035px;width:89px;height:3px;background:linear-gradient(#9a9a9a 0,#9a9a9a 1px,#111 1px)"></div>
<div class="a" style="left:455px;top:1035px;width:941px;height:3px;background:linear-gradient(#9a9a9a,#d8d8d8)"></div>
</div>
</body></html>
